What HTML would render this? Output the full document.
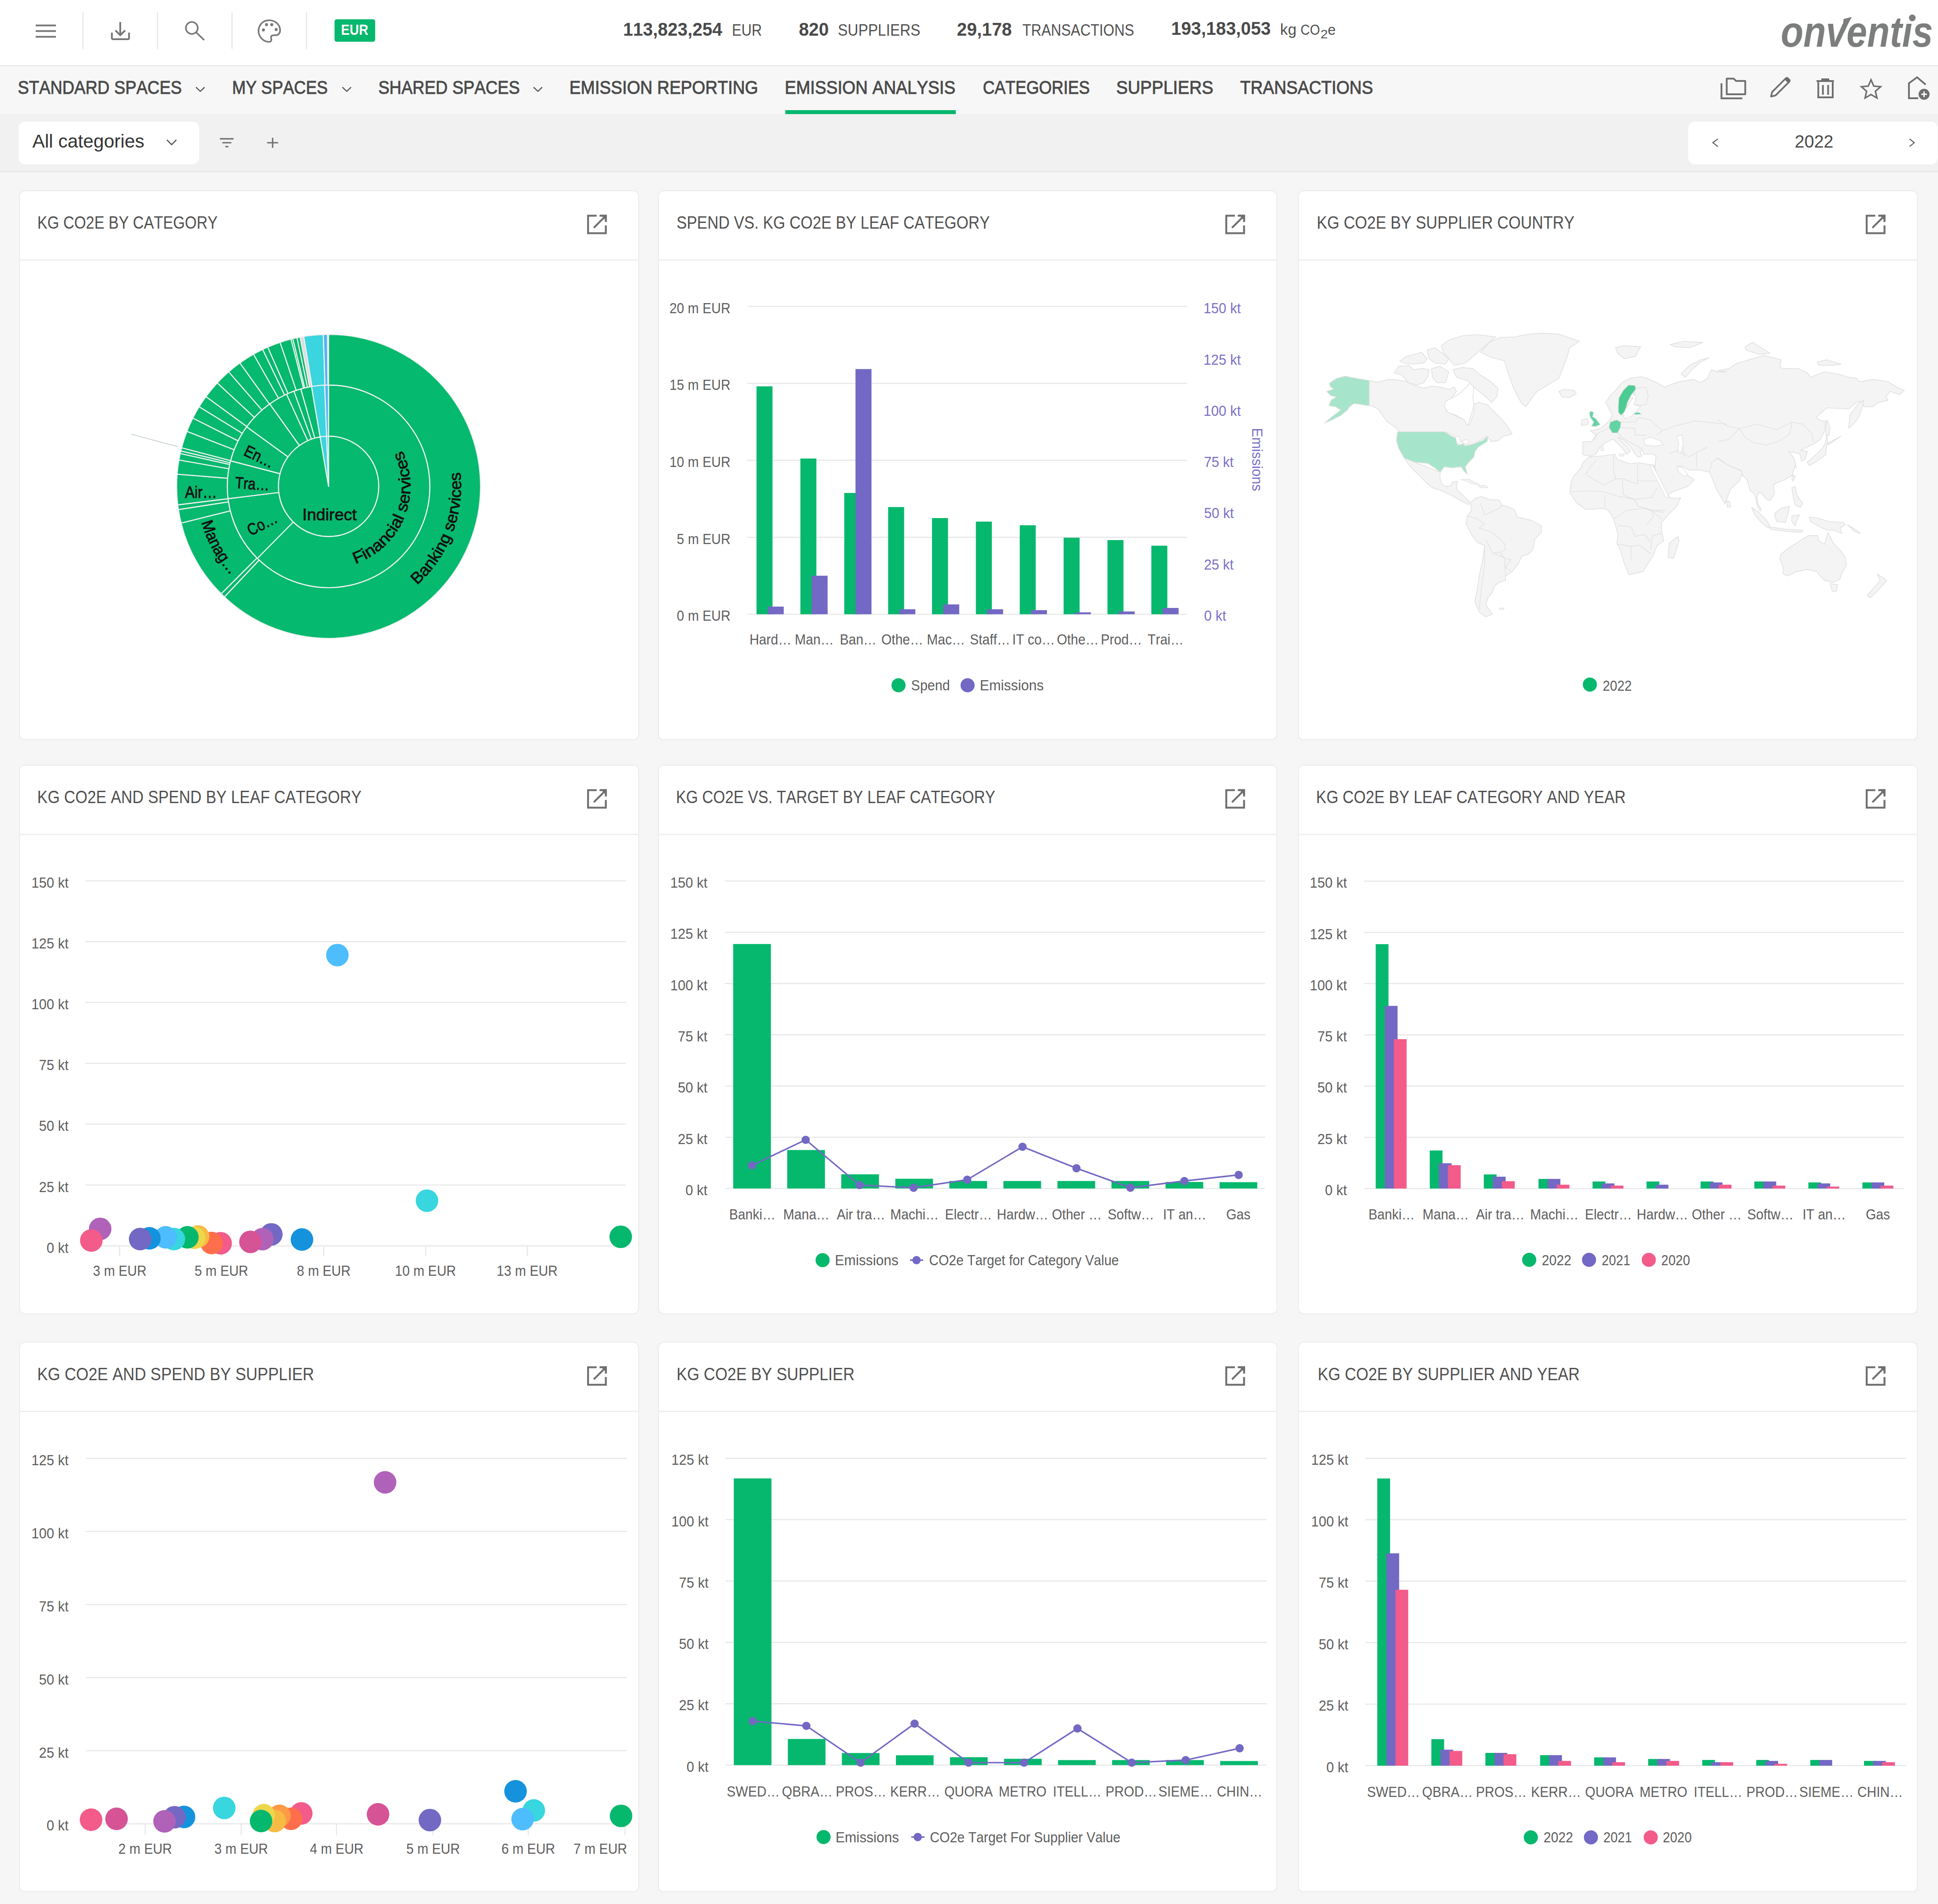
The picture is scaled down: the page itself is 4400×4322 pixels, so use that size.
<!DOCTYPE html>
<html><head><meta charset="utf-8"><title>Emission Analysis</title>
<style>
html,body{margin:0;padding:0;}
body{width:4400px;height:4322px;position:relative;overflow:hidden;background:#f6f6f6;font-family:"Liberation Sans", sans-serif;font-kerning:none;}
.abs{position:absolute;}
.panel{position:absolute;background:#fff;border:2px solid #ebebeb;border-radius:13px;box-sizing:border-box;}
svg text{font-family:"Liberation Sans", sans-serif;font-kerning:none;}
</style></head><body>
<div class="abs" style="left:0;top:0;width:4400px;height:148px;background:#fff;border-bottom:2px solid #e6e6e6"></div><div class="abs" style="left:0;top:150px;width:4400px;height:109px;background:#f7f7f7"></div><div class="abs" style="left:0;top:259px;width:4400px;height:130px;background:#f1f1f1;border-bottom:2px solid #e3e3e3"></div><div class="abs" style="left:42px;top:276px;width:410px;height:97px;background:#fff;border-radius:15px"></div><div class="abs" style="left:3832.5px;top:275.5px;width:566px;height:97px;background:#fff;border-radius:15px"></div><div class="panel" style="left:43px;top:432px;width:1408px;height:1248px"></div><div class="panel" style="left:1494px;top:432px;width:1406px;height:1248px"></div><div class="panel" style="left:2947px;top:432px;width:1407px;height:1248px"></div><div class="panel" style="left:43px;top:1736px;width:1408px;height:1247px"></div><div class="panel" style="left:1494px;top:1736px;width:1406px;height:1247px"></div><div class="panel" style="left:2947px;top:1736px;width:1407px;height:1247px"></div><div class="panel" style="left:43px;top:3046px;width:1408px;height:1249px"></div><div class="panel" style="left:1494px;top:3046px;width:1406px;height:1249px"></div><div class="panel" style="left:2947px;top:3046px;width:1407px;height:1249px"></div><svg class="abs" style="left:0;top:0" width="4400" height="4322" viewBox="0 0 4400 4322"><line x1="81" y1="57.8" x2="127" y2="57.8" stroke="#777777" stroke-width="4"/>
<line x1="81" y1="70.6" x2="127" y2="70.6" stroke="#777777" stroke-width="4"/>
<line x1="81" y1="83.4" x2="127" y2="83.4" stroke="#777777" stroke-width="4"/>
<line x1="188.5" y1="28" x2="188.5" y2="111" stroke="#e4e4e4" stroke-width="2.5"/>
<line x1="357.5" y1="28" x2="357.5" y2="111" stroke="#e4e4e4" stroke-width="2.5"/>
<line x1="526.8" y1="28" x2="526.8" y2="111" stroke="#e4e4e4" stroke-width="2.5"/>
<line x1="695.8" y1="28" x2="695.8" y2="111" stroke="#e4e4e4" stroke-width="2.5"/>
<path d="M273 50 V80 M262 69 L273 80 L284 69" fill="none" stroke="#777777" stroke-width="4"/>
<path d="M254 74 V86 Q254 89 257 89 H290 Q293 89 293 86 V74" fill="none" stroke="#777777" stroke-width="4"/>
<circle cx="435.5" cy="63.5" r="13.5" fill="none" stroke="#777777" stroke-width="3.6"/>
<line x1="445.5" y1="73.5" x2="463.5" y2="91" stroke="#777777" stroke-width="3.8"/>
<path d="M611 46 C596 46 587 58 587 70 C587 84 598 95 611 95 C615 95 617 92 616 88 C614 84 616 80 621 80 L626 80 C632 80 636 75 636 69 C636 55 624 46 611 46 Z" fill="none" stroke="#777777" stroke-width="3.6"/>
<circle cx="598" cy="68" r="3.4" fill="#777777"/>
<circle cx="605" cy="56" r="3.4" fill="#777777"/>
<circle cx="617" cy="56" r="3.4" fill="#777777"/>
<circle cx="627" cy="67" r="3.4" fill="#777777"/>
<rect x="759.5" y="43.7" width="92.3" height="51.1" rx="5" fill="#06b86d"/>
<text transform="translate(774.2,78.8) scale(0.8895,1)" font-size="32.99" fill="#fff" font-weight="bold">EUR</text>
<text transform="translate(1414.8,80.9) scale(0.9371,1)" font-size="43.17" fill="#4a4a4a" font-weight="bold">113,823,254</text>
<text transform="translate(1661.8,80.9) scale(0.8904,1)" font-size="36.19" fill="#505050">EUR</text>
<text transform="translate(1813.7,80.9) scale(0.9436,1)" font-size="43.17" fill="#4a4a4a" font-weight="bold">820</text>
<text transform="translate(1902.3,80.9) scale(0.9217,1)" font-size="36.19" fill="#505050">SUPPLIERS</text>
<text transform="translate(2172.6,80.9) scale(0.9442,1)" font-size="43.17" fill="#4a4a4a" font-weight="bold">29,178</text>
<text transform="translate(2321.3,80.9) scale(0.8952,1)" font-size="36.19" fill="#505050">TRANSACTIONS</text>
<text transform="translate(2659.1,78.8) scale(0.9420,1)" font-size="43.17" fill="#4a4a4a" font-weight="bold">193,183,053</text>
<text transform="translate(2906.3,78.8) scale(1.0111,1)" font-size="34.88" fill="#505050">kg</text>
<text transform="translate(2952.8,78.8) scale(0.8697,1)" font-size="33.72" fill="#505050">CO</text>
<text transform="translate(2998.3,87.4) scale(1.0998,1)" font-size="26.74" fill="#505050">2</text>
<text transform="translate(3014.6,78.8) scale(0.9606,1)" font-size="33.72" fill="#505050">e</text>
<text transform="translate(4042.9,106.3) scale(0.8530,1)" font-size="98.55" fill="#7c7e7d" font-weight="bold" font-style="italic">onventıs</text>
<polygon points="4184.3,54.9 4195.5,54.9 4204.3,38.6 4185.7,43.1" fill="#7c7e7d"/>
<circle cx="4341.6" cy="40.6" r="7.6" fill="#7c7e7d"/>
<text transform="translate(40.6,213.0) scale(0.8795,1)" font-size="43.02" fill="#4b4b4b" stroke="#4b4b4b" stroke-width="1.1">STANDARD SPACES</text>
<text transform="translate(526.9,213.0) scale(0.8659,1)" font-size="43.02" fill="#4b4b4b" stroke="#4b4b4b" stroke-width="1.1">MY SPACES</text>
<text transform="translate(858.9,213.0) scale(0.8788,1)" font-size="43.02" fill="#4b4b4b" stroke="#4b4b4b" stroke-width="1.1">SHARED SPACES</text>
<text transform="translate(1292.8,213.0) scale(0.8966,1)" font-size="43.02" fill="#4b4b4b" stroke="#4b4b4b" stroke-width="1.1">EMISSION REPORTING</text>
<text transform="translate(1781.8,213.0) scale(0.8953,1)" font-size="43.02" fill="#4b4b4b" stroke="#4b4b4b" stroke-width="1.1">EMISSION ANALYSIS</text>
<text transform="translate(2231.4,213.0) scale(0.8607,1)" font-size="43.02" fill="#4b4b4b" stroke="#4b4b4b" stroke-width="1.1">CATEGORIES</text>
<text transform="translate(2534.2,213.0) scale(0.9134,1)" font-size="43.02" fill="#4b4b4b" stroke="#4b4b4b" stroke-width="1.1">SUPPLIERS</text>
<text transform="translate(2815.8,213.0) scale(0.8949,1)" font-size="43.02" fill="#4b4b4b" stroke="#4b4b4b" stroke-width="1.1">TRANSACTIONS</text>
<path d="M445.0 198 L454.7 207.3 L464.5 198" fill="none" stroke="#555" stroke-width="2.5"/>
<path d="M777.5 198 L787.1999999999999 207.3 L797.0 198" fill="none" stroke="#555" stroke-width="2.5"/>
<path d="M1211.5 198 L1221.2 207.3 L1231.0 198" fill="none" stroke="#555" stroke-width="2.5"/>
<rect x="1783" y="250" width="387" height="9" fill="#06b86d"/>
<path d="M3908.4 189 V223.2 H3955.8" fill="none" stroke="#6e6e6e" stroke-width="4"/>
<path d="M3920.3 178.4 H3936 L3941.3 183.7 H3962.4 V214 H3920.3 Z" fill="none" stroke="#6e6e6e" stroke-width="4" stroke-linejoin="round"/>
<g transform="translate(4040,200) rotate(45)"><path d="M-5.5 -27 H5.5 V18 L0 27 L-5.5 18 Z" fill="none" stroke="#6e6e6e" stroke-width="3.8" stroke-linejoin="round" transform="rotate(0)"/><rect x="-5.5" y="-31" width="11" height="9" fill="#6e6e6e"/></g>
<path d="M4124.2 184 H4163.7 M4135 180 H4153 M4128.2 186.3 V221 H4161 V186.3 M4138.7 193 V215 M4150.5 193 V215" fill="none" stroke="#6e6e6e" stroke-width="4"/>
<polygon points="4247.9,181.0 4254.1,195.5 4269.8,196.9 4257.9,207.2 4261.4,222.6 4247.9,214.5 4234.4,222.6 4237.9,207.2 4226.0,196.9 4241.7,195.5" fill="none" stroke="#6e6e6e" stroke-width="3.4" stroke-linejoin="miter"/>
<path d="M4355 223 H4334 V189 L4352.5 175.5 L4372 192" fill="none" stroke="#6e6e6e" stroke-width="4"/>
<circle cx="4368.4" cy="214" r="12.5" fill="#6e6e6e"/>
<path d="M4362 214 H4375 M4368.4 207.5 V220.5" stroke="#fff" stroke-width="3"/>
<text transform="translate(73.4,335.4) scale(0.9855,1)" font-size="43.02" fill="#333">All categories</text>
<path d="M379 317.5 L389.7 328.5 L400.4 317.5" fill="none" stroke="#555" stroke-width="2.6"/>
<path d="M499.2 315.2 H530.4 M504.8 324 H525.3 M511.6 332.9 H518.5" stroke="#6f6f6f" stroke-width="3.2"/>
<path d="M606.4 324 H631.4 M619 312.7 V335.4" stroke="#6f6f6f" stroke-width="3.2"/>
<path d="M3900.2 315.4 L3888.8 323.8 L3900.2 332.7" fill="none" stroke="#5a5a5a" stroke-width="2.3"/>
<path d="M4335.4 315.4 L4346.2 323.8 L4335.4 332.7" fill="none" stroke="#5a5a5a" stroke-width="2.3"/>
<text transform="translate(4074.8,334.8) scale(0.9491,1)" font-size="41.57" fill="#4a4a4a">2022</text>
<text transform="translate(84.7,519.0) scale(0.8421,1)" font-size="40.70" fill="#505050">KG CO2E BY CATEGORY</text>
<line x1="44" y1="590" x2="1450" y2="590" stroke="#ececec" stroke-width="2.5"/>
<path d="M1354.7 489.6 H1335.1 V529.4 H1375.5 V511.8 M1361.2 489.6 H1375.5 V503.9 M1348.1 517.1 L1374.5 490.7" fill="none" stroke="#6f6f6f" stroke-width="4.3"/><path d="M1363 487.5 H1377.6 V502.1 Z" fill="#6f6f6f"/>
<text transform="translate(1535.9,519.0) scale(0.8598,1)" font-size="40.70" fill="#505050">SPEND VS. KG CO2E BY LEAF CATEGORY</text>
<line x1="1495" y1="590" x2="2899" y2="590" stroke="#ececec" stroke-width="2.5"/>
<path d="M2803.7 489.6 H2784.1 V529.4 H2824.5 V511.8 M2810.2 489.6 H2824.5 V503.9 M2797.1 517.1 L2823.5 490.7" fill="none" stroke="#6f6f6f" stroke-width="4.3"/><path d="M2812 487.5 H2826.6 V502.1 Z" fill="#6f6f6f"/>
<text transform="translate(2989.6,519.0) scale(0.8712,1)" font-size="40.70" fill="#505050">KG CO2E BY SUPPLIER COUNTRY</text>
<line x1="2948" y1="590" x2="4353" y2="590" stroke="#ececec" stroke-width="2.5"/>
<path d="M4257.7 489.6 H4238.1 V529.4 H4278.5 V511.8 M4264.2 489.6 H4278.5 V503.9 M4251.1 517.1 L4277.5 490.7" fill="none" stroke="#6f6f6f" stroke-width="4.3"/><path d="M4266 487.5 H4280.6 V502.1 Z" fill="#6f6f6f"/>
<text transform="translate(84.6,1823.0) scale(0.8681,1)" font-size="40.70" fill="#505050">KG CO2E AND SPEND BY LEAF CATEGORY</text>
<line x1="44" y1="1894" x2="1450" y2="1894" stroke="#ececec" stroke-width="2.5"/>
<path d="M1354.7 1793.6 H1335.1 V1833.4 H1375.5 V1815.8 M1361.2 1793.6 H1375.5 V1807.9 M1348.1 1821.1 L1374.5 1794.7" fill="none" stroke="#6f6f6f" stroke-width="4.3"/><path d="M1363 1791.5 H1377.6 V1806.1 Z" fill="#6f6f6f"/>
<text transform="translate(1534.7,1823.0) scale(0.8505,1)" font-size="40.70" fill="#505050">KG CO2E VS. TARGET BY LEAF CATEGORY</text>
<line x1="1495" y1="1894" x2="2899" y2="1894" stroke="#ececec" stroke-width="2.5"/>
<path d="M2803.7 1793.6 H2784.1 V1833.4 H2824.5 V1815.8 M2810.2 1793.6 H2824.5 V1807.9 M2797.1 1821.1 L2823.5 1794.7" fill="none" stroke="#6f6f6f" stroke-width="4.3"/><path d="M2812 1791.5 H2826.6 V1806.1 Z" fill="#6f6f6f"/>
<text transform="translate(2988.1,1823.0) scale(0.8588,1)" font-size="40.70" fill="#505050">KG CO2E BY LEAF CATEGORY AND YEAR</text>
<line x1="2948" y1="1894" x2="4353" y2="1894" stroke="#ececec" stroke-width="2.5"/>
<path d="M4257.7 1793.6 H4238.1 V1833.4 H4278.5 V1815.8 M4264.2 1793.6 H4278.5 V1807.9 M4251.1 1821.1 L4277.5 1794.7" fill="none" stroke="#6f6f6f" stroke-width="4.3"/><path d="M4266 1791.5 H4280.6 V1806.1 Z" fill="#6f6f6f"/>
<text transform="translate(84.5,3133.0) scale(0.8882,1)" font-size="40.70" fill="#505050">KG CO2E AND SPEND BY SUPPLIER</text>
<line x1="44" y1="3204" x2="1450" y2="3204" stroke="#ececec" stroke-width="2.5"/>
<path d="M1354.7 3103.6 H1335.1 V3143.4 H1375.5 V3125.8 M1361.2 3103.6 H1375.5 V3117.9 M1348.1 3131.1 L1374.5 3104.7" fill="none" stroke="#6f6f6f" stroke-width="4.3"/><path d="M1363 3101.5 H1377.6 V3116.1 Z" fill="#6f6f6f"/>
<text transform="translate(1536.1,3133.0) scale(0.8799,1)" font-size="40.70" fill="#505050">KG CO2E BY SUPPLIER</text>
<line x1="1495" y1="3204" x2="2899" y2="3204" stroke="#ececec" stroke-width="2.5"/>
<path d="M2803.7 3103.6 H2784.1 V3143.4 H2824.5 V3125.8 M2810.2 3103.6 H2824.5 V3117.9 M2797.1 3131.1 L2823.5 3104.7" fill="none" stroke="#6f6f6f" stroke-width="4.3"/><path d="M2812 3101.5 H2826.6 V3116.1 Z" fill="#6f6f6f"/>
<text transform="translate(2991.8,3133.0) scale(0.8766,1)" font-size="40.70" fill="#505050">KG CO2E BY SUPPLIER AND YEAR</text>
<line x1="2948" y1="3204" x2="4353" y2="3204" stroke="#ececec" stroke-width="2.5"/>
<path d="M4257.7 3103.6 H4238.1 V3143.4 H4278.5 V3125.8 M4264.2 3103.6 H4278.5 V3117.9 M4251.1 3131.1 L4277.5 3104.7" fill="none" stroke="#6f6f6f" stroke-width="4.3"/><path d="M4266 3101.5 H4280.6 V3116.1 Z" fill="#6f6f6f"/>
<path d="M746 1104 L746.00 990.00 A114 114 0 1 1 726.79 991.63 Z" fill="#05b96e" stroke="#f2f2f2" stroke-width="2.4" stroke-linejoin="round"/>
<path d="M746 1104 L726.79 991.63 A114 114 0 0 1 741.62 990.08 Z" fill="#3ad5df" stroke="#f2f2f2" stroke-width="2.4" stroke-linejoin="round"/>
<path d="M746 1104 L741.62 990.08 A114 114 0 0 1 745.80 990.00 Z" fill="#56b2f7" stroke="#f2f2f2" stroke-width="2.4" stroke-linejoin="round"/>
<path d="M746.00 874.00 A230 230 0 1 1 584.22 1267.48 L665.81 1185.03 A114 114 0 1 0 746.00 990.00 Z" fill="#05b96e" stroke="#f2f2f2" stroke-width="2.4" stroke-linejoin="round"/>
<path d="M584.22 1267.48 A230 230 0 0 1 517.71 1132.03 L632.85 1117.89 A114 114 0 0 0 665.81 1185.03 Z" fill="#05b96e" stroke="#f2f2f2" stroke-width="2.4" stroke-linejoin="round"/>
<path d="M517.71 1132.03 A230 230 0 0 1 523.43 1046.02 L635.68 1075.26 A114 114 0 0 0 632.85 1117.89 Z" fill="#05b96e" stroke="#f2f2f2" stroke-width="2.4" stroke-linejoin="round"/>
<path d="M523.43 1046.02 A230 230 0 0 1 559.93 968.81 L653.77 1036.99 A114 114 0 0 0 635.68 1075.26 Z" fill="#05b96e" stroke="#f2f2f2" stroke-width="2.4" stroke-linejoin="round"/>
<path d="M559.93 968.81 A230 230 0 0 1 612.44 916.75 L679.80 1011.19 A114 114 0 0 0 653.77 1036.99 Z" fill="#05b96e" stroke="#f2f2f2" stroke-width="2.4" stroke-linejoin="round"/>
<path d="M612.44 916.75 A230 230 0 0 1 650.62 894.71 L698.72 1000.26 A114 114 0 0 0 679.80 1011.19 Z" fill="#05b96e" stroke="#f2f2f2" stroke-width="2.4" stroke-linejoin="round"/>
<path d="M650.62 894.71 A230 230 0 0 1 667.34 887.87 L707.01 996.88 A114 114 0 0 0 698.72 1000.26 Z" fill="#05b96e" stroke="#f2f2f2" stroke-width="2.4" stroke-linejoin="round"/>
<path d="M667.34 887.87 A230 230 0 0 1 682.99 882.80 L714.77 994.36 A114 114 0 0 0 707.01 996.88 Z" fill="#05b96e" stroke="#f2f2f2" stroke-width="2.4" stroke-linejoin="round"/>
<path d="M682.99 882.80 A230 230 0 0 1 707.25 877.29 L726.79 991.63 A114 114 0 0 0 714.77 994.36 Z" fill="#05b96e" stroke="#f2f2f2" stroke-width="2.4" stroke-linejoin="round"/>
<path d="M707.25 877.29 A230 230 0 0 1 737.17 874.17 L741.62 990.08 A114 114 0 0 0 726.79 991.63 Z" fill="#3ad5df" stroke="#f2f2f2" stroke-width="2.4" stroke-linejoin="round"/>
<path d="M737.17 874.17 A230 230 0 0 1 745.60 874.00 L745.80 990.00 A114 114 0 0 0 741.62 990.08 Z" fill="#56b2f7" stroke="#f2f2f2" stroke-width="2.4" stroke-linejoin="round"/>
<path d="M746.00 759.00 A345 345 0 1 1 509.39 1355.08 L588.26 1271.39 A230 230 0 1 0 746.00 874.00 Z" fill="#05b96e" stroke="#f2f2f2" stroke-width="2.4" stroke-linejoin="round"/>
<path d="M509.39 1355.08 A345 345 0 0 1 502.05 1347.95 L583.37 1266.63 A230 230 0 0 0 588.26 1271.39 Z" fill="#05b96e" stroke="#f2f2f2" stroke-width="2.4" stroke-linejoin="round"/>
<path d="M502.05 1347.95 A345 345 0 0 1 411.25 1187.46 L522.83 1159.64 A230 230 0 0 0 583.37 1266.63 Z" fill="#05b96e" stroke="#f2f2f2" stroke-width="2.4" stroke-linejoin="round"/>
<path d="M411.25 1187.46 A345 345 0 0 1 405.06 1156.78 L518.71 1139.19 A230 230 0 0 0 522.83 1159.64 Z" fill="#05b96e" stroke="#f2f2f2" stroke-width="2.4" stroke-linejoin="round"/>
<path d="M405.06 1156.78 A345 345 0 0 1 403.57 1146.04 L517.71 1132.03 A230 230 0 0 0 518.71 1139.19 Z" fill="#05b96e" stroke="#f2f2f2" stroke-width="2.4" stroke-linejoin="round"/>
<path d="M403.57 1146.04 A345 345 0 0 1 402.11 1076.33 L516.74 1085.55 A230 230 0 0 0 517.71 1132.03 Z" fill="#05b96e" stroke="#f2f2f2" stroke-width="2.4" stroke-linejoin="round"/>
<path d="M402.11 1076.33 A345 345 0 0 1 406.24 1044.09 L519.49 1064.06 A230 230 0 0 0 516.74 1085.55 Z" fill="#05b96e" stroke="#f2f2f2" stroke-width="2.4" stroke-linejoin="round"/>
<path d="M406.24 1044.09 A345 345 0 0 1 409.18 1029.33 L521.45 1054.22 A230 230 0 0 0 519.49 1064.06 Z" fill="#05b96e" stroke="#f2f2f2" stroke-width="2.4" stroke-linejoin="round"/>
<path d="M409.18 1029.33 A345 345 0 0 1 410.53 1023.46 L522.35 1050.31 A230 230 0 0 0 521.45 1054.22 Z" fill="#05b96e" stroke="#f2f2f2" stroke-width="2.4" stroke-linejoin="round"/>
<path d="M410.53 1023.46 A345 345 0 0 1 412.29 1016.45 L523.53 1045.64 A230 230 0 0 0 522.35 1050.31 Z" fill="#05b96e" stroke="#f2f2f2" stroke-width="2.4" stroke-linejoin="round"/>
<path d="M412.29 1016.45 A345 345 0 0 1 424.35 979.24 L531.57 1020.83 A230 230 0 0 0 523.53 1045.64 Z" fill="#05b96e" stroke="#f2f2f2" stroke-width="2.4" stroke-linejoin="round"/>
<path d="M424.35 979.24 A345 345 0 0 1 437.79 948.98 L540.52 1000.66 A230 230 0 0 0 531.57 1020.83 Z" fill="#05b96e" stroke="#f2f2f2" stroke-width="2.4" stroke-linejoin="round"/>
<path d="M437.79 948.98 A345 345 0 0 1 452.15 923.22 L550.10 983.48 A230 230 0 0 0 540.52 1000.66 Z" fill="#05b96e" stroke="#f2f2f2" stroke-width="2.4" stroke-linejoin="round"/>
<path d="M452.15 923.22 A345 345 0 0 1 467.60 900.24 L560.40 968.16 A230 230 0 0 0 550.10 983.48 Z" fill="#05b96e" stroke="#f2f2f2" stroke-width="2.4" stroke-linejoin="round"/>
<path d="M467.60 900.24 A345 345 0 0 1 493.27 869.15 L577.52 947.43 A230 230 0 0 0 560.40 968.16 Z" fill="#05b96e" stroke="#f2f2f2" stroke-width="2.4" stroke-linejoin="round"/>
<path d="M493.27 869.15 A345 345 0 0 1 519.21 844.02 L594.80 930.68 A230 230 0 0 0 577.52 947.43 Z" fill="#05b96e" stroke="#f2f2f2" stroke-width="2.4" stroke-linejoin="round"/>
<path d="M519.21 844.02 A345 345 0 0 1 544.68 823.83 L611.79 917.22 A230 230 0 0 0 594.80 930.68 Z" fill="#05b96e" stroke="#f2f2f2" stroke-width="2.4" stroke-linejoin="round"/>
<path d="M544.68 823.83 A345 345 0 0 1 575.59 804.02 L632.39 904.02 A230 230 0 0 0 611.79 917.22 Z" fill="#05b96e" stroke="#f2f2f2" stroke-width="2.4" stroke-linejoin="round"/>
<path d="M575.59 804.02 A345 345 0 0 1 596.39 793.13 L646.26 896.75 A230 230 0 0 0 632.39 904.02 Z" fill="#05b96e" stroke="#f2f2f2" stroke-width="2.4" stroke-linejoin="round"/>
<path d="M596.39 793.13 A345 345 0 0 1 607.88 787.85 L653.92 893.24 A230 230 0 0 0 646.26 896.75 Z" fill="#05b96e" stroke="#f2f2f2" stroke-width="2.4" stroke-linejoin="round"/>
<path d="M607.88 787.85 A345 345 0 0 1 635.96 777.02 L672.64 886.01 A230 230 0 0 0 653.92 893.24 Z" fill="#05b96e" stroke="#f2f2f2" stroke-width="2.4" stroke-linejoin="round"/>
<path d="M635.96 777.02 A345 345 0 0 1 660.79 769.69 L689.19 881.13 A230 230 0 0 0 672.64 886.01 Z" fill="#05b96e" stroke="#f2f2f2" stroke-width="2.4" stroke-linejoin="round"/>
<path d="M660.79 769.69 A345 345 0 0 1 664.88 768.67 L691.92 880.45 A230 230 0 0 0 689.19 881.13 Z" fill="#05b96e" stroke="#f2f2f2" stroke-width="2.4" stroke-linejoin="round"/>
<path d="M664.88 768.67 A345 345 0 0 1 674.27 766.54 L698.18 879.03 A230 230 0 0 0 691.92 880.45 Z" fill="#05b96e" stroke="#f2f2f2" stroke-width="2.4" stroke-linejoin="round"/>
<path d="M674.27 766.54 A345 345 0 0 1 681.35 765.11 L702.90 878.07 A230 230 0 0 0 698.18 879.03 Z" fill="#05b96e" stroke="#f2f2f2" stroke-width="2.4" stroke-linejoin="round"/>
<path d="M681.35 765.11 A345 345 0 0 1 689.65 763.63 L708.44 877.09 A230 230 0 0 0 702.90 878.07 Z" fill="#dcdcdc" stroke="#f2f2f2" stroke-width="2.4" stroke-linejoin="round"/>
<path d="M689.65 763.63 A345 345 0 0 1 733.96 759.21 L737.97 874.14 A230 230 0 0 0 708.44 877.09 Z" fill="#3ad5df" stroke="#f2f2f2" stroke-width="2.4" stroke-linejoin="round"/>
<path d="M733.96 759.21 A345 345 0 0 1 743.59 759.01 L744.39 874.01 A230 230 0 0 0 737.97 874.14 Z" fill="#56b2f7" stroke="#f2f2f2" stroke-width="2.4" stroke-linejoin="round"/>
<line x1="297.8" y1="985.6" x2="404" y2="1014" stroke="#c9d3d3" stroke-width="2"/>
<text transform="translate(686.5,1181.2) scale(1.0188,1)" font-size="36.92" fill="#111" stroke="#111" stroke-width="0.9">Indirect</text>
<path id="fs" d="M762.21 1289.29 A186 186 0 0 0 888.48 984.44" fill="none"/>
<text font-size="36.92" fill="#111" stroke="#111" stroke-width="1.0"><textPath href="#fs" startOffset="50%" text-anchor="middle" textLength="314" lengthAdjust="spacingAndGlyphs">Financial services</textPath></text>
<path id="bs" d="M896.50 1364.67 A301 301 0 0 0 1032.27 1010.99" fill="none"/>
<text font-size="36.92" fill="#111" stroke="#111" stroke-width="1.0"><textPath href="#bs" startOffset="50%" text-anchor="middle" textLength="285" lengthAdjust="spacingAndGlyphs">Banking services</textPath></text>
<path id="mg" d="M446.00 1104.00 A300 300 0 0 0 587.02 1358.41" fill="none"/>
<text font-size="36.92" fill="#111" stroke="#111" stroke-width="1.0"><textPath href="#mg" startOffset="50%" text-anchor="middle" textLength="138" lengthAdjust="spacingAndGlyphs">Manag…</textPath></text>
<g transform="translate(594.0,1190.0) rotate(-27.0)"><text transform="translate(-34.6,12.7) scale(0.8546,1)" font-size="36.92" fill="#111" stroke="#111" stroke-width="0.9">Co…</text></g>
<g transform="translate(571.0,1098.0) rotate(4.0)"><text transform="translate(-37.2,12.7) scale(0.8444,1)" font-size="36.92" fill="#111" stroke="#111" stroke-width="0.9">Tra…</text></g>
<g transform="translate(588.0,1036.0) rotate(26.0)"><text transform="translate(-34.6,12.7) scale(0.8645,1)" font-size="36.92" fill="#111" stroke="#111" stroke-width="0.9">En…</text></g>
<g transform="translate(454.2,1117.0) rotate(0.0)"><text transform="translate(-34.1,12.7) scale(0.8836,1)" font-size="36.92" fill="#111" stroke="#111" stroke-width="0.9">Air…</text></g>
<line x1="1697" y1="695.5" x2="2695" y2="695.5" stroke="#e8e8e8" stroke-width="2.6"/>
<text transform="translate(1519.9,710.6) scale(0.9100,1)" font-size="32.99" fill="#5e5e5e">20 m EUR</text>
<line x1="1697" y1="870.2" x2="2695" y2="870.2" stroke="#e8e8e8" stroke-width="2.6"/>
<text transform="translate(1519.9,885.3) scale(0.9100,1)" font-size="32.99" fill="#5e5e5e">15 m EUR</text>
<line x1="1697" y1="1044.9" x2="2695" y2="1044.9" stroke="#e8e8e8" stroke-width="2.6"/>
<text transform="translate(1519.9,1060.0) scale(0.9100,1)" font-size="32.99" fill="#5e5e5e">10 m EUR</text>
<line x1="1697" y1="1219.6" x2="2695" y2="1219.6" stroke="#e8e8e8" stroke-width="2.6"/>
<text transform="translate(1536.6,1234.7) scale(0.9100,1)" font-size="32.99" fill="#5e5e5e">5 m EUR</text>
<line x1="1697" y1="1394.3" x2="2695" y2="1394.3" stroke="#e8e8e8" stroke-width="2.6"/>
<text transform="translate(1536.6,1409.4) scale(0.9100,1)" font-size="32.99" fill="#5e5e5e">0 m EUR</text>
<text transform="translate(2732.6,711.4) scale(0.9400,1)" font-size="32.99" fill="#7a70c8">150 kt</text>
<text transform="translate(2732.6,827.6) scale(0.9400,1)" font-size="32.99" fill="#7a70c8">125 kt</text>
<text transform="translate(2732.6,943.9) scale(0.9400,1)" font-size="32.99" fill="#7a70c8">100 kt</text>
<text transform="translate(2733.4,1060.1) scale(0.9400,1)" font-size="32.99" fill="#7a70c8">75 kt</text>
<text transform="translate(2733.8,1176.3) scale(0.9400,1)" font-size="32.99" fill="#7a70c8">50 kt</text>
<text transform="translate(2733.4,1292.6) scale(0.9400,1)" font-size="32.99" fill="#7a70c8">25 kt</text>
<text transform="translate(2733.8,1408.8) scale(0.9400,1)" font-size="32.99" fill="#7a70c8">0 kt</text>
<g transform="translate(2854,1044) rotate(90)"><text transform="translate(-72.6,11.3) scale(0.9560,1)" font-size="32.99" fill="#7a70c8">Emissions</text></g>
<rect x="1717.6" y="877.0" width="36.3" height="517.3" fill="#06b86d"/>
<rect x="1743.1" y="1377.0" width="36.3" height="17.3" fill="#7368c4"/>
<text transform="translate(1701.7,1463.2) scale(0.9100,1)" font-size="32.99" fill="#5e5e5e">Hard…</text>
<rect x="1817.2" y="1040.8" width="36.3" height="353.5" fill="#06b86d"/>
<rect x="1842.7" y="1306.8" width="36.3" height="87.5" fill="#7368c4"/>
<text transform="translate(1804.6,1463.2) scale(0.9100,1)" font-size="32.99" fill="#5e5e5e">Man…</text>
<rect x="1916.8" y="1119.0" width="36.3" height="275.3" fill="#06b86d"/>
<rect x="1942.3" y="837.8" width="36.3" height="556.5" fill="#7368c4"/>
<text transform="translate(1906.7,1463.2) scale(0.9100,1)" font-size="32.99" fill="#5e5e5e">Ban…</text>
<rect x="2016.4" y="1151.0" width="36.3" height="243.3" fill="#06b86d"/>
<rect x="2041.9" y="1383.0" width="36.3" height="11.3" fill="#7368c4"/>
<text transform="translate(2001.0,1463.2) scale(0.9100,1)" font-size="32.99" fill="#5e5e5e">Othe…</text>
<rect x="2116.0" y="1176.0" width="36.3" height="218.3" fill="#06b86d"/>
<rect x="2141.5" y="1372.0" width="36.3" height="22.3" fill="#7368c4"/>
<text transform="translate(2104.2,1463.2) scale(0.9100,1)" font-size="32.99" fill="#5e5e5e">Mac…</text>
<rect x="2215.6" y="1184.0" width="36.3" height="210.3" fill="#06b86d"/>
<rect x="2241.1" y="1383.0" width="36.3" height="11.3" fill="#7368c4"/>
<text transform="translate(2201.9,1463.2) scale(0.9100,1)" font-size="32.99" fill="#5e5e5e">Staff…</text>
<rect x="2315.2" y="1192.3" width="36.3" height="202.0" fill="#06b86d"/>
<rect x="2340.7" y="1385.0" width="36.3" height="9.3" fill="#7368c4"/>
<text transform="translate(2298.3,1463.2) scale(0.9100,1)" font-size="32.99" fill="#5e5e5e">IT co…</text>
<rect x="2414.8" y="1220.6" width="36.3" height="173.7" fill="#06b86d"/>
<rect x="2440.3" y="1390.0" width="36.3" height="4.3" fill="#7368c4"/>
<text transform="translate(2399.4,1463.2) scale(0.9100,1)" font-size="32.99" fill="#5e5e5e">Othe…</text>
<rect x="2514.4" y="1226.0" width="36.3" height="168.3" fill="#06b86d"/>
<rect x="2539.9" y="1388.0" width="36.3" height="6.3" fill="#7368c4"/>
<text transform="translate(2499.3,1463.2) scale(0.9100,1)" font-size="32.99" fill="#5e5e5e">Prod…</text>
<rect x="2614.0" y="1238.7" width="36.3" height="155.6" fill="#06b86d"/>
<rect x="2639.5" y="1380.0" width="36.3" height="14.3" fill="#7368c4"/>
<text transform="translate(2605.6,1463.2) scale(0.9100,1)" font-size="32.99" fill="#5e5e5e">Trai…</text>
<circle cx="2040.0" cy="1555.5" r="16" fill="#06b86d"/>
<text transform="translate(2068.6,1567.0) scale(0.9228,1)" font-size="32.99" fill="#5e5e5e">Spend</text>
<circle cx="2196.8" cy="1555.5" r="16" fill="#7368c4"/>
<text transform="translate(2224.4,1567.0) scale(0.9669,1)" font-size="32.99" fill="#5e5e5e">Emissions</text>
<circle cx="3609.6" cy="1553.9" r="16" fill="#06b86d"/>
<text transform="translate(3638.8,1567.6) scale(0.8796,1)" font-size="33.72" fill="#5e5e5e">2022</text>
<line x1="194" y1="1999.5" x2="1421" y2="1999.5" stroke="#e8e8e8" stroke-width="2.6"/>
<text transform="translate(71.2,2015.0) scale(0.9400,1)" font-size="32.99" fill="#5e5e5e">150 kt</text>
<line x1="194" y1="2137.6" x2="1421" y2="2137.6" stroke="#e8e8e8" stroke-width="2.6"/>
<text transform="translate(71.2,2153.1) scale(0.9400,1)" font-size="32.99" fill="#5e5e5e">125 kt</text>
<line x1="194" y1="2275.7" x2="1421" y2="2275.7" stroke="#e8e8e8" stroke-width="2.6"/>
<text transform="translate(71.2,2291.2) scale(0.9400,1)" font-size="32.99" fill="#5e5e5e">100 kt</text>
<line x1="194" y1="2413.8" x2="1421" y2="2413.8" stroke="#e8e8e8" stroke-width="2.6"/>
<text transform="translate(88.5,2429.3) scale(0.9400,1)" font-size="32.99" fill="#5e5e5e">75 kt</text>
<line x1="194" y1="2551.9" x2="1421" y2="2551.9" stroke="#e8e8e8" stroke-width="2.6"/>
<text transform="translate(88.5,2567.4) scale(0.9400,1)" font-size="32.99" fill="#5e5e5e">50 kt</text>
<line x1="194" y1="2690.0" x2="1421" y2="2690.0" stroke="#e8e8e8" stroke-width="2.6"/>
<text transform="translate(88.5,2705.5) scale(0.9400,1)" font-size="32.99" fill="#5e5e5e">25 kt</text>
<line x1="194" y1="2828.1" x2="1421" y2="2828.1" stroke="#e8e8e8" stroke-width="2.6"/>
<text transform="translate(105.7,2843.6) scale(0.9400,1)" font-size="32.99" fill="#5e5e5e">0 kt</text>
<line x1="271.7" y1="2828" x2="271.7" y2="2852" stroke="#e8e8e8" stroke-width="2.6"/>
<text transform="translate(210.9,2896.3) scale(0.9100,1)" font-size="32.99" fill="#5e5e5e">3 m EUR</text>
<line x1="502.6" y1="2828" x2="502.6" y2="2852" stroke="#e8e8e8" stroke-width="2.6"/>
<text transform="translate(441.8,2896.3) scale(0.9100,1)" font-size="32.99" fill="#5e5e5e">5 m EUR</text>
<line x1="734.9" y1="2828" x2="734.9" y2="2852" stroke="#e8e8e8" stroke-width="2.6"/>
<text transform="translate(674.1,2896.3) scale(0.9100,1)" font-size="32.99" fill="#5e5e5e">8 m EUR</text>
<line x1="966.5" y1="2828" x2="966.5" y2="2852" stroke="#e8e8e8" stroke-width="2.6"/>
<text transform="translate(896.8,2896.3) scale(0.9100,1)" font-size="32.99" fill="#5e5e5e">10 m EUR</text>
<line x1="1197.3" y1="2828" x2="1197.3" y2="2852" stroke="#e8e8e8" stroke-width="2.6"/>
<text transform="translate(1127.6,2896.3) scale(0.9100,1)" font-size="32.99" fill="#5e5e5e">13 m EUR</text>
<circle cx="1409.3" cy="2807.5" r="25.6" fill="#06b86d"/>
<circle cx="969.4" cy="2725.5" r="25.6" fill="#38d6de"/>
<circle cx="766.0" cy="2168.0" r="25.6" fill="#4dbdfe"/>
<circle cx="685.6" cy="2813.7" r="25.6" fill="#1592dc"/>
<circle cx="616.0" cy="2802.0" r="25.6" fill="#7368c4"/>
<circle cx="595.8" cy="2812.8" r="25.6" fill="#b062b8"/>
<circle cx="568.6" cy="2819.0" r="25.6" fill="#d65396"/>
<circle cx="500.9" cy="2822.2" r="25.6" fill="#f25b8a"/>
<circle cx="480.5" cy="2821.7" r="25.6" fill="#ff6e4b"/>
<circle cx="449.8" cy="2806.8" r="25.6" fill="#f6bb42"/>
<circle cx="440.8" cy="2809.7" r="25.6" fill="#eed64a"/>
<circle cx="425.4" cy="2808.6" r="25.6" fill="#06b86d"/>
<circle cx="394.8" cy="2812.6" r="25.6" fill="#38d6de"/>
<circle cx="376.1" cy="2808.6" r="25.6" fill="#4dbdfe"/>
<circle cx="339.2" cy="2810.9" r="25.6" fill="#1592dc"/>
<circle cx="318.2" cy="2812.6" r="25.6" fill="#7368c4"/>
<circle cx="227.4" cy="2789.5" r="25.6" fill="#b062b8"/>
<circle cx="207.3" cy="2815.9" r="25.6" fill="#f25b8a"/>
<line x1="1645.8" y1="2000.0" x2="2872.4" y2="2000.0" stroke="#e8e8e8" stroke-width="2.6"/>
<text transform="translate(1521.7,2015.0) scale(0.9400,1)" font-size="32.99" fill="#5e5e5e">150 kt</text>
<line x1="1645.8" y1="2116.3" x2="2872.4" y2="2116.3" stroke="#e8e8e8" stroke-width="2.6"/>
<text transform="translate(1521.7,2131.3) scale(0.9400,1)" font-size="32.99" fill="#5e5e5e">125 kt</text>
<line x1="1645.8" y1="2232.6" x2="2872.4" y2="2232.6" stroke="#e8e8e8" stroke-width="2.6"/>
<text transform="translate(1521.7,2247.6) scale(0.9400,1)" font-size="32.99" fill="#5e5e5e">100 kt</text>
<line x1="1645.8" y1="2348.9" x2="2872.4" y2="2348.9" stroke="#e8e8e8" stroke-width="2.6"/>
<text transform="translate(1539.0,2363.9) scale(0.9400,1)" font-size="32.99" fill="#5e5e5e">75 kt</text>
<line x1="1645.8" y1="2465.2" x2="2872.4" y2="2465.2" stroke="#e8e8e8" stroke-width="2.6"/>
<text transform="translate(1539.0,2480.2) scale(0.9400,1)" font-size="32.99" fill="#5e5e5e">50 kt</text>
<line x1="1645.8" y1="2581.5" x2="2872.4" y2="2581.5" stroke="#e8e8e8" stroke-width="2.6"/>
<text transform="translate(1539.0,2596.5) scale(0.9400,1)" font-size="32.99" fill="#5e5e5e">25 kt</text>
<line x1="1645.8" y1="2697.8" x2="2872.4" y2="2697.8" stroke="#e8e8e8" stroke-width="2.6"/>
<text transform="translate(1556.2,2712.8) scale(0.9400,1)" font-size="32.99" fill="#5e5e5e">0 kt</text>
<rect x="1664.6" y="2142.9" width="85.6" height="554.9" fill="#06b86d"/>
<text transform="translate(1655.6,2768.4) scale(0.9100,1)" font-size="32.99" fill="#5e5e5e">Banki…</text>
<rect x="1787.3" y="2610.5" width="85.6" height="87.3" fill="#06b86d"/>
<text transform="translate(1778.3,2768.4) scale(0.9100,1)" font-size="32.99" fill="#5e5e5e">Mana…</text>
<rect x="1910.0" y="2665.6" width="85.6" height="32.2" fill="#06b86d"/>
<text transform="translate(1899.8,2768.4) scale(0.9100,1)" font-size="32.99" fill="#5e5e5e">Air tra…</text>
<rect x="2032.7" y="2675.7" width="85.6" height="22.1" fill="#06b86d"/>
<text transform="translate(2021.2,2768.4) scale(0.9100,1)" font-size="32.99" fill="#5e5e5e">Machi…</text>
<rect x="2155.4" y="2680.8" width="85.6" height="17.0" fill="#06b86d"/>
<text transform="translate(2145.6,2768.4) scale(0.9100,1)" font-size="32.99" fill="#5e5e5e">Electr…</text>
<rect x="2278.1" y="2680.8" width="85.6" height="17.0" fill="#06b86d"/>
<text transform="translate(2263.3,2768.4) scale(0.9100,1)" font-size="32.99" fill="#5e5e5e">Hardw…</text>
<rect x="2400.8" y="2680.8" width="85.6" height="17.0" fill="#06b86d"/>
<text transform="translate(2388.2,2768.4) scale(0.9100,1)" font-size="32.99" fill="#5e5e5e">Other …</text>
<rect x="2523.5" y="2680.8" width="85.6" height="17.0" fill="#06b86d"/>
<text transform="translate(2515.1,2768.4) scale(0.9100,1)" font-size="32.99" fill="#5e5e5e">Softw…</text>
<rect x="2646.2" y="2683.0" width="85.6" height="14.8" fill="#06b86d"/>
<text transform="translate(2640.4,2768.4) scale(0.9100,1)" font-size="32.99" fill="#5e5e5e">IT an…</text>
<rect x="2768.9" y="2683.5" width="85.6" height="14.3" fill="#06b86d"/>
<text transform="translate(2784.0,2768.4) scale(0.9100,1)" font-size="32.99" fill="#5e5e5e">Gas</text>
<polyline points="1707.4,2645.3 1829.2,2587.3 1951.7,2690.2 2074.2,2696 2196,2677.9 2321.5,2603.2 2444,2651.8 2566.5,2696 2689,2680.8 2812.2,2667" fill="none" stroke="#7368c4" stroke-width="3.4" stroke-linejoin="round"/>
<circle cx="1707.4" cy="2645.3" r="9.4" fill="#7368c4"/>
<circle cx="1829.2" cy="2587.3" r="9.4" fill="#7368c4"/>
<circle cx="1951.7" cy="2690.2" r="9.4" fill="#7368c4"/>
<circle cx="2074.2" cy="2696.0" r="9.4" fill="#7368c4"/>
<circle cx="2196.0" cy="2677.9" r="9.4" fill="#7368c4"/>
<circle cx="2321.5" cy="2603.2" r="9.4" fill="#7368c4"/>
<circle cx="2444.0" cy="2651.8" r="9.4" fill="#7368c4"/>
<circle cx="2566.5" cy="2696.0" r="9.4" fill="#7368c4"/>
<circle cx="2689.0" cy="2680.8" r="9.4" fill="#7368c4"/>
<circle cx="2812.2" cy="2667.0" r="9.4" fill="#7368c4"/>
<circle cx="1867.6" cy="2860.5" r="16" fill="#06b86d"/>
<text transform="translate(1895.4,2872.0) scale(0.9608,1)" font-size="32.99" fill="#5e5e5e">Emissions</text>
<line x1="2066" y1="2860.5" x2="2096" y2="2860.5" stroke="#7368c4" stroke-width="3.4"/>
<circle cx="2080.8" cy="2860.5" r="9.4" fill="#7368c4"/>
<text transform="translate(2109.5,2872.0) scale(0.9071,1)" font-size="32.99" fill="#5e5e5e">CO2e Target for Category Value</text>
<line x1="3097.3" y1="2000.2" x2="4322.8" y2="2000.2" stroke="#e8e8e8" stroke-width="2.6"/>
<text transform="translate(2973.7,2015.2) scale(0.9400,1)" font-size="32.99" fill="#5e5e5e">150 kt</text>
<line x1="3097.3" y1="2116.5" x2="4322.8" y2="2116.5" stroke="#e8e8e8" stroke-width="2.6"/>
<text transform="translate(2973.7,2131.5) scale(0.9400,1)" font-size="32.99" fill="#5e5e5e">125 kt</text>
<line x1="3097.3" y1="2232.8" x2="4322.8" y2="2232.8" stroke="#e8e8e8" stroke-width="2.6"/>
<text transform="translate(2973.7,2247.8) scale(0.9400,1)" font-size="32.99" fill="#5e5e5e">100 kt</text>
<line x1="3097.3" y1="2349.1" x2="4322.8" y2="2349.1" stroke="#e8e8e8" stroke-width="2.6"/>
<text transform="translate(2991.0,2364.1) scale(0.9400,1)" font-size="32.99" fill="#5e5e5e">75 kt</text>
<line x1="3097.3" y1="2465.4" x2="4322.8" y2="2465.4" stroke="#e8e8e8" stroke-width="2.6"/>
<text transform="translate(2991.0,2480.4) scale(0.9400,1)" font-size="32.99" fill="#5e5e5e">50 kt</text>
<line x1="3097.3" y1="2581.7" x2="4322.8" y2="2581.7" stroke="#e8e8e8" stroke-width="2.6"/>
<text transform="translate(2991.0,2596.7) scale(0.9400,1)" font-size="32.99" fill="#5e5e5e">25 kt</text>
<line x1="3097.3" y1="2698.0" x2="4322.8" y2="2698.0" stroke="#e8e8e8" stroke-width="2.6"/>
<text transform="translate(3008.2,2713.0) scale(0.9400,1)" font-size="32.99" fill="#5e5e5e">0 kt</text>
<rect x="3123.4" y="2143.2" width="29.0" height="554.7" fill="#06b86d"/>
<rect x="3144.0" y="2283.3" width="29.0" height="414.6" fill="#7368c4"/>
<rect x="3164.6" y="2358.8" width="29.0" height="339.1" fill="#f25b8a"/>
<text transform="translate(3107.0,2768.0) scale(0.9100,1)" font-size="32.99" fill="#5e5e5e">Banki…</text>
<rect x="3246.1" y="2611.5" width="29.0" height="86.4" fill="#06b86d"/>
<rect x="3266.7" y="2640.5" width="29.0" height="57.4" fill="#7368c4"/>
<rect x="3287.3" y="2644.9" width="29.0" height="53.0" fill="#f25b8a"/>
<text transform="translate(3229.7,2768.0) scale(0.9100,1)" font-size="32.99" fill="#5e5e5e">Mana…</text>
<rect x="3368.8" y="2665.9" width="29.0" height="32.0" fill="#06b86d"/>
<rect x="3389.4" y="2671.0" width="29.0" height="26.9" fill="#7368c4"/>
<rect x="3410.0" y="2681.2" width="29.0" height="16.7" fill="#f25b8a"/>
<text transform="translate(3351.1,2768.0) scale(0.9100,1)" font-size="32.99" fill="#5e5e5e">Air tra…</text>
<rect x="3493.0" y="2676.1" width="29.0" height="21.8" fill="#06b86d"/>
<rect x="3513.6" y="2676.1" width="29.0" height="21.8" fill="#7368c4"/>
<rect x="3534.2" y="2689.2" width="29.0" height="8.7" fill="#f25b8a"/>
<text transform="translate(3474.0,2768.0) scale(0.9100,1)" font-size="32.99" fill="#5e5e5e">Machi…</text>
<rect x="3615.7" y="2681.9" width="29.0" height="16.0" fill="#06b86d"/>
<rect x="3636.3" y="2686.3" width="29.0" height="11.6" fill="#7368c4"/>
<rect x="3656.9" y="2691.3" width="29.0" height="6.6" fill="#f25b8a"/>
<text transform="translate(3598.4,2768.0) scale(0.9100,1)" font-size="32.99" fill="#5e5e5e">Electr…</text>
<rect x="3738.3" y="2681.9" width="29.0" height="16.0" fill="#06b86d"/>
<rect x="3758.9" y="2689.2" width="29.0" height="8.7" fill="#7368c4"/>
<text transform="translate(3716.1,2768.0) scale(0.9100,1)" font-size="32.99" fill="#5e5e5e">Hardw…</text>
<rect x="3861.0" y="2681.9" width="29.0" height="16.0" fill="#06b86d"/>
<rect x="3881.6" y="2684.1" width="29.0" height="13.8" fill="#7368c4"/>
<rect x="3902.2" y="2689.2" width="29.0" height="8.7" fill="#f25b8a"/>
<text transform="translate(3840.9,2768.0) scale(0.9100,1)" font-size="32.99" fill="#5e5e5e">Other …</text>
<rect x="3983.0" y="2681.9" width="29.0" height="16.0" fill="#06b86d"/>
<rect x="4003.6" y="2681.9" width="29.0" height="16.0" fill="#7368c4"/>
<rect x="4024.2" y="2691.3" width="29.0" height="6.6" fill="#f25b8a"/>
<text transform="translate(3967.1,2768.0) scale(0.9100,1)" font-size="32.99" fill="#5e5e5e">Softw…</text>
<rect x="4105.7" y="2684.1" width="29.0" height="13.8" fill="#06b86d"/>
<rect x="4126.3" y="2686.3" width="29.0" height="11.6" fill="#7368c4"/>
<rect x="4146.9" y="2693.5" width="29.0" height="4.4" fill="#f25b8a"/>
<text transform="translate(4092.4,2768.0) scale(0.9100,1)" font-size="32.99" fill="#5e5e5e">IT an…</text>
<rect x="4228.4" y="2684.1" width="29.0" height="13.8" fill="#06b86d"/>
<rect x="4249.0" y="2684.1" width="29.0" height="13.8" fill="#7368c4"/>
<rect x="4269.6" y="2691.3" width="29.0" height="6.6" fill="#f25b8a"/>
<text transform="translate(4236.0,2768.0) scale(0.9100,1)" font-size="32.99" fill="#5e5e5e">Gas</text>
<circle cx="3471.9" cy="2859.8" r="16" fill="#06b86d"/>
<text transform="translate(3500.5,2871.5) scale(0.9132,1)" font-size="32.99" fill="#5e5e5e">2022</text>
<circle cx="3607.7" cy="2859.8" r="16" fill="#7368c4"/>
<text transform="translate(3636.5,2871.5) scale(0.8841,1)" font-size="32.99" fill="#5e5e5e">2021</text>
<circle cx="3743.4" cy="2859.8" r="16" fill="#f25b8a"/>
<text transform="translate(3771.5,2871.5) scale(0.8942,1)" font-size="32.99" fill="#5e5e5e">2020</text>
<line x1="195.5" y1="3310.4" x2="1422.4" y2="3310.4" stroke="#e8e8e8" stroke-width="2.6"/>
<text transform="translate(71.2,3325.9) scale(0.9400,1)" font-size="32.99" fill="#5e5e5e">125 kt</text>
<line x1="195.5" y1="3476.3" x2="1422.4" y2="3476.3" stroke="#e8e8e8" stroke-width="2.6"/>
<text transform="translate(71.2,3491.8) scale(0.9400,1)" font-size="32.99" fill="#5e5e5e">100 kt</text>
<line x1="195.5" y1="3642.2" x2="1422.4" y2="3642.2" stroke="#e8e8e8" stroke-width="2.6"/>
<text transform="translate(88.5,3657.7) scale(0.9400,1)" font-size="32.99" fill="#5e5e5e">75 kt</text>
<line x1="195.5" y1="3808.1" x2="1422.4" y2="3808.1" stroke="#e8e8e8" stroke-width="2.6"/>
<text transform="translate(88.5,3823.6) scale(0.9400,1)" font-size="32.99" fill="#5e5e5e">50 kt</text>
<line x1="195.5" y1="3974.0" x2="1422.4" y2="3974.0" stroke="#e8e8e8" stroke-width="2.6"/>
<text transform="translate(88.5,3989.5) scale(0.9400,1)" font-size="32.99" fill="#5e5e5e">25 kt</text>
<line x1="195.5" y1="4139.9" x2="1422.4" y2="4139.9" stroke="#e8e8e8" stroke-width="2.6"/>
<text transform="translate(105.7,4155.4) scale(0.9400,1)" font-size="32.99" fill="#5e5e5e">0 kt</text>
<line x1="329.8" y1="4140" x2="329.8" y2="4166" stroke="#e8e8e8" stroke-width="2.6"/>
<text transform="translate(268.8,4208.0) scale(0.9100,1)" font-size="32.99" fill="#5e5e5e">2 m EUR</text>
<line x1="547.6" y1="4140" x2="547.6" y2="4166" stroke="#e8e8e8" stroke-width="2.6"/>
<text transform="translate(486.8,4208.0) scale(0.9100,1)" font-size="32.99" fill="#5e5e5e">3 m EUR</text>
<line x1="764" y1="4140" x2="764" y2="4166" stroke="#e8e8e8" stroke-width="2.6"/>
<text transform="translate(703.5,4208.0) scale(0.9100,1)" font-size="32.99" fill="#5e5e5e">4 m EUR</text>
<line x1="983.2" y1="4140" x2="983.2" y2="4166" stroke="#e8e8e8" stroke-width="2.6"/>
<text transform="translate(922.4,4208.0) scale(0.9100,1)" font-size="32.99" fill="#5e5e5e">5 m EUR</text>
<line x1="1199.5" y1="4140" x2="1199.5" y2="4166" stroke="#e8e8e8" stroke-width="2.6"/>
<text transform="translate(1138.5,4208.0) scale(0.9100,1)" font-size="32.99" fill="#5e5e5e">6 m EUR</text>
<line x1="1418.8" y1="4140" x2="1418.8" y2="4166" stroke="#e8e8e8" stroke-width="2.6"/>
<text transform="translate(1302.0,4208.0) scale(0.9100,1)" font-size="32.99" fill="#5e5e5e">7 m EUR</text>
<circle cx="1410.0" cy="4122.0" r="25.6" fill="#06b86d"/>
<circle cx="1211.9" cy="4109.7" r="25.6" fill="#38d6de"/>
<circle cx="1186.5" cy="4129.3" r="25.6" fill="#4dbdfe"/>
<circle cx="1170.5" cy="4066.1" r="25.6" fill="#1592dc"/>
<circle cx="976.0" cy="4131.5" r="25.6" fill="#7368c4"/>
<circle cx="874.3" cy="3364.8" r="25.6" fill="#b062b8"/>
<circle cx="858.3" cy="4118.4" r="25.6" fill="#d65396"/>
<circle cx="684.0" cy="4116.3" r="25.6" fill="#f25b8a"/>
<circle cx="660.8" cy="4128.7" r="25.6" fill="#ff6e4b"/>
<circle cx="634.5" cy="4121.9" r="25.6" fill="#fd9a45"/>
<circle cx="623.7" cy="4133.7" r="25.6" fill="#f6bb42"/>
<circle cx="598.9" cy="4120.4" r="25.6" fill="#eed64a"/>
<circle cx="592.7" cy="4133.7" r="25.6" fill="#06b86d"/>
<circle cx="509.1" cy="4104.0" r="25.6" fill="#38d6de"/>
<circle cx="417.8" cy="4124.4" r="25.6" fill="#1592dc"/>
<circle cx="396.1" cy="4125.0" r="25.6" fill="#7368c4"/>
<circle cx="373.5" cy="4134.3" r="25.6" fill="#b062b8"/>
<circle cx="264.6" cy="4128.7" r="25.6" fill="#d65396"/>
<circle cx="206.7" cy="4130.6" r="25.6" fill="#f25b8a"/>
<line x1="1647.2" y1="3310.2" x2="2876" y2="3310.2" stroke="#e8e8e8" stroke-width="2.6"/>
<text transform="translate(1524.2,3325.2) scale(0.9400,1)" font-size="32.99" fill="#5e5e5e">125 kt</text>
<line x1="1647.2" y1="3449.5" x2="2876" y2="3449.5" stroke="#e8e8e8" stroke-width="2.6"/>
<text transform="translate(1524.2,3464.5) scale(0.9400,1)" font-size="32.99" fill="#5e5e5e">100 kt</text>
<line x1="1647.2" y1="3588.8" x2="2876" y2="3588.8" stroke="#e8e8e8" stroke-width="2.6"/>
<text transform="translate(1541.5,3603.8) scale(0.9400,1)" font-size="32.99" fill="#5e5e5e">75 kt</text>
<line x1="1647.2" y1="3728.1" x2="2876" y2="3728.1" stroke="#e8e8e8" stroke-width="2.6"/>
<text transform="translate(1541.5,3743.1) scale(0.9400,1)" font-size="32.99" fill="#5e5e5e">50 kt</text>
<line x1="1647.2" y1="3867.4" x2="2876" y2="3867.4" stroke="#e8e8e8" stroke-width="2.6"/>
<text transform="translate(1541.5,3882.4) scale(0.9400,1)" font-size="32.99" fill="#5e5e5e">25 kt</text>
<line x1="1647.2" y1="4006.7" x2="2876" y2="4006.7" stroke="#e8e8e8" stroke-width="2.6"/>
<text transform="translate(1558.7,4021.7) scale(0.9400,1)" font-size="32.99" fill="#5e5e5e">0 kt</text>
<rect x="1666.0" y="3355.9" width="85.5" height="650.8" fill="#06b86d"/>
<text transform="translate(1650.1,4077.6) scale(0.9100,1)" font-size="32.99" fill="#5e5e5e">SWED…</text>
<rect x="1788.7" y="3947.4" width="85.5" height="59.3" fill="#06b86d"/>
<text transform="translate(1775.3,4077.6) scale(0.9100,1)" font-size="32.99" fill="#5e5e5e">QBRA…</text>
<rect x="1911.4" y="3979.3" width="85.5" height="27.4" fill="#06b86d"/>
<text transform="translate(1897.4,4077.6) scale(0.9100,1)" font-size="32.99" fill="#5e5e5e">PROS…</text>
<rect x="2034.1" y="3984.4" width="85.5" height="22.3" fill="#06b86d"/>
<text transform="translate(2021.0,4077.6) scale(0.9100,1)" font-size="32.99" fill="#5e5e5e">KERR…</text>
<rect x="2156.8" y="3988.8" width="85.5" height="17.9" fill="#06b86d"/>
<text transform="translate(2143.9,4077.6) scale(0.9100,1)" font-size="32.99" fill="#5e5e5e">QUORA</text>
<rect x="2279.5" y="3992.4" width="85.5" height="14.3" fill="#06b86d"/>
<text transform="translate(2267.6,4077.6) scale(0.9100,1)" font-size="32.99" fill="#5e5e5e">METRO</text>
<rect x="2402.2" y="3995.3" width="85.5" height="11.4" fill="#06b86d"/>
<text transform="translate(2390.6,4077.6) scale(0.9100,1)" font-size="32.99" fill="#5e5e5e">ITELL…</text>
<rect x="2524.9" y="3995.3" width="85.5" height="11.4" fill="#06b86d"/>
<text transform="translate(2510.1,4077.6) scale(0.9100,1)" font-size="32.99" fill="#5e5e5e">PROD…</text>
<rect x="2647.6" y="3995.3" width="85.5" height="11.4" fill="#06b86d"/>
<text transform="translate(2630.0,4077.6) scale(0.9100,1)" font-size="32.99" fill="#5e5e5e">SIEME…</text>
<rect x="2770.3" y="3997.5" width="85.5" height="9.2" fill="#06b86d"/>
<text transform="translate(2762.7,4077.6) scale(0.9100,1)" font-size="32.99" fill="#5e5e5e">CHIN…</text>
<polyline points="1708.9,3906.8 1830.7,3917.7 1953.9,4001.1 2076.4,3912.6 2199,4001.1 2325,4001.1 2446.2,3923.5 2569.4,4001.1 2692,3995.3 2814.4,3968.5" fill="none" stroke="#7368c4" stroke-width="3.4" stroke-linejoin="round"/>
<circle cx="1708.9" cy="3906.8" r="9.4" fill="#7368c4"/>
<circle cx="1830.7" cy="3917.7" r="9.4" fill="#7368c4"/>
<circle cx="1953.9" cy="4001.1" r="9.4" fill="#7368c4"/>
<circle cx="2076.4" cy="3912.6" r="9.4" fill="#7368c4"/>
<circle cx="2199.0" cy="4001.1" r="9.4" fill="#7368c4"/>
<circle cx="2325.0" cy="4001.1" r="9.4" fill="#7368c4"/>
<circle cx="2446.2" cy="3923.5" r="9.4" fill="#7368c4"/>
<circle cx="2569.4" cy="4001.1" r="9.4" fill="#7368c4"/>
<circle cx="2692.0" cy="3995.3" r="9.4" fill="#7368c4"/>
<circle cx="2814.4" cy="3968.5" r="9.4" fill="#7368c4"/>
<circle cx="1869.8" cy="4170.0" r="16" fill="#06b86d"/>
<text transform="translate(1896.9,4181.5) scale(0.9594,1)" font-size="32.99" fill="#5e5e5e">Emissions</text>
<line x1="2069" y1="4170" x2="2099" y2="4170" stroke="#7368c4" stroke-width="3.4"/>
<circle cx="2083.7" cy="4170.0" r="9.4" fill="#7368c4"/>
<text transform="translate(2111.2,4181.5) scale(0.9147,1)" font-size="32.99" fill="#5e5e5e">CO2e Target For Supplier Value</text>
<line x1="3099.5" y1="3310.3" x2="4327.9" y2="3310.3" stroke="#e8e8e8" stroke-width="2.6"/>
<text transform="translate(2976.7,3325.3) scale(0.9400,1)" font-size="32.99" fill="#5e5e5e">125 kt</text>
<line x1="3099.5" y1="3449.8" x2="4327.9" y2="3449.8" stroke="#e8e8e8" stroke-width="2.6"/>
<text transform="translate(2976.7,3464.8) scale(0.9400,1)" font-size="32.99" fill="#5e5e5e">100 kt</text>
<line x1="3099.5" y1="3589.3" x2="4327.9" y2="3589.3" stroke="#e8e8e8" stroke-width="2.6"/>
<text transform="translate(2994.0,3604.3) scale(0.9400,1)" font-size="32.99" fill="#5e5e5e">75 kt</text>
<line x1="3099.5" y1="3728.8" x2="4327.9" y2="3728.8" stroke="#e8e8e8" stroke-width="2.6"/>
<text transform="translate(2994.0,3743.8) scale(0.9400,1)" font-size="32.99" fill="#5e5e5e">50 kt</text>
<line x1="3099.5" y1="3868.3" x2="4327.9" y2="3868.3" stroke="#e8e8e8" stroke-width="2.6"/>
<text transform="translate(2994.0,3883.3) scale(0.9400,1)" font-size="32.99" fill="#5e5e5e">25 kt</text>
<line x1="3099.5" y1="4007.8" x2="4327.9" y2="4007.8" stroke="#e8e8e8" stroke-width="2.6"/>
<text transform="translate(3011.2,4022.8) scale(0.9400,1)" font-size="32.99" fill="#5e5e5e">0 kt</text>
<rect x="3127.0" y="3356.1" width="29.0" height="651.9" fill="#06b86d"/>
<rect x="3147.6" y="3526.0" width="29.0" height="482.0" fill="#7368c4"/>
<rect x="3168.2" y="3608.7" width="29.0" height="399.3" fill="#f25b8a"/>
<text transform="translate(3103.7,4078.8) scale(0.9100,1)" font-size="32.99" fill="#5e5e5e">SWED…</text>
<rect x="3249.7" y="3947.8" width="29.0" height="60.2" fill="#06b86d"/>
<rect x="3270.3" y="3971.7" width="29.0" height="36.3" fill="#7368c4"/>
<rect x="3290.9" y="3974.6" width="29.0" height="33.4" fill="#f25b8a"/>
<text transform="translate(3228.8,4078.8) scale(0.9100,1)" font-size="32.99" fill="#5e5e5e">QBRA…</text>
<rect x="3372.4" y="3979.0" width="29.0" height="29.0" fill="#06b86d"/>
<rect x="3393.0" y="3979.0" width="29.0" height="29.0" fill="#7368c4"/>
<rect x="3413.6" y="3981.9" width="29.0" height="26.1" fill="#f25b8a"/>
<text transform="translate(3351.0,4078.8) scale(0.9100,1)" font-size="32.99" fill="#5e5e5e">PROS…</text>
<rect x="3496.6" y="3984.1" width="29.0" height="23.9" fill="#06b86d"/>
<rect x="3517.2" y="3984.1" width="29.0" height="23.9" fill="#7368c4"/>
<rect x="3537.8" y="3997.2" width="29.0" height="10.8" fill="#f25b8a"/>
<text transform="translate(3476.0,4078.8) scale(0.9100,1)" font-size="32.99" fill="#5e5e5e">KERR…</text>
<rect x="3619.3" y="3989.2" width="29.0" height="18.8" fill="#06b86d"/>
<rect x="3639.9" y="3989.2" width="29.0" height="18.8" fill="#7368c4"/>
<rect x="3660.5" y="4000.1" width="29.0" height="7.9" fill="#f25b8a"/>
<text transform="translate(3598.8,4078.8) scale(0.9100,1)" font-size="32.99" fill="#5e5e5e">QUORA</text>
<rect x="3742.0" y="3992.8" width="29.0" height="15.2" fill="#06b86d"/>
<rect x="3762.6" y="3992.8" width="29.0" height="15.2" fill="#7368c4"/>
<rect x="3783.2" y="3997.2" width="29.0" height="10.8" fill="#f25b8a"/>
<text transform="translate(3722.6,4078.8) scale(0.9100,1)" font-size="32.99" fill="#5e5e5e">METRO</text>
<rect x="3864.7" y="3995.0" width="29.0" height="13.0" fill="#06b86d"/>
<rect x="3885.3" y="4000.1" width="29.0" height="7.9" fill="#7368c4"/>
<rect x="3905.9" y="4000.1" width="29.0" height="7.9" fill="#f25b8a"/>
<text transform="translate(3845.6,4078.8) scale(0.9100,1)" font-size="32.99" fill="#5e5e5e">ITELL…</text>
<rect x="3987.4" y="3995.0" width="29.0" height="13.0" fill="#06b86d"/>
<rect x="4008.0" y="3997.2" width="29.0" height="10.8" fill="#7368c4"/>
<rect x="4028.6" y="4003.7" width="29.0" height="4.3" fill="#f25b8a"/>
<text transform="translate(3965.1,4078.8) scale(0.9100,1)" font-size="32.99" fill="#5e5e5e">PROD…</text>
<rect x="4110.1" y="3995.0" width="29.0" height="13.0" fill="#06b86d"/>
<rect x="4130.7" y="3995.0" width="29.0" height="13.0" fill="#7368c4"/>
<text transform="translate(4085.0,4078.8) scale(0.9100,1)" font-size="32.99" fill="#5e5e5e">SIEME…</text>
<rect x="4232.0" y="3997.2" width="29.0" height="10.8" fill="#06b86d"/>
<rect x="4252.6" y="3997.2" width="29.0" height="10.8" fill="#7368c4"/>
<rect x="4273.2" y="4000.1" width="29.0" height="7.9" fill="#f25b8a"/>
<text transform="translate(4216.9,4078.8) scale(0.9100,1)" font-size="32.99" fill="#5e5e5e">CHIN…</text>
<circle cx="3475.5" cy="4170.7" r="16" fill="#06b86d"/>
<text transform="translate(3504.5,4182.3) scale(0.9132,1)" font-size="32.99" fill="#5e5e5e">2022</text>
<circle cx="3612.0" cy="4170.7" r="16" fill="#7368c4"/>
<text transform="translate(3640.3,4182.3) scale(0.8841,1)" font-size="32.99" fill="#5e5e5e">2021</text>
<circle cx="3747.8" cy="4170.7" r="16" fill="#f25b8a"/>
<text transform="translate(3775.3,4182.3) scale(0.8942,1)" font-size="32.99" fill="#5e5e5e">2020</text>
<polygon points="3108.6,863.8 3128.4,867.6 3153.2,861.4 3173.0,862.6 3195.3,866.3 3207.7,873.7 3232.4,881.2 3249.8,876.2 3269.6,878.7 3289.4,883.7 3301.8,878.7 3306.7,888.6 3289.4,910.9 3282.0,918.3 3284.5,933.2 3311.7,948.0 3326.6,953.0 3334.0,965.4 3338.9,958.0 3346.4,935.7 3346.4,918.3 3356.3,913.4 3376.1,918.3 3395.9,938.1 3410.8,953.0 3423.2,967.9 3433.1,985.2 3413.3,990.2 3400.9,1000.1 3386.0,1002.5 3376.1,990.2 3356.3,1002.5 3338.9,1010.0 3324.1,1012.4 3319.1,1002.5 3306.7,997.6 3301.8,987.7 3279.5,980.2 3178.0,980.2 3168.0,970.3 3148.2,955.5 3128.4,928.2 3113.6,920.8 3108.6,920.8" fill="#f4f4f4" stroke="#e0e0e0" stroke-width="1.6" stroke-linejoin="round"/>
<polygon points="3282.0,910.9 3301.8,901.0 3316.7,891.1 3329.0,878.7 3338.9,868.8 3346.4,878.7 3343.9,901.0 3346.4,918.3 3341.4,938.1 3336.5,953.0 3331.5,965.4 3324.1,953.0 3306.7,943.1 3286.9,935.7 3279.5,923.3" fill="#fff" stroke="#e0e0e0" stroke-width="1.6" stroke-linejoin="round"/>
<polygon points="3165.6,846.5 3175.5,831.6 3197.8,829.2 3210.2,839.1 3230.0,836.6 3244.8,839.1 3242.4,853.9 3232.4,868.8 3217.6,873.7 3197.8,868.8 3182.9,851.5" fill="#f4f4f4" stroke="#e0e0e0" stroke-width="1.6" stroke-linejoin="round"/>
<polygon points="3178.0,819.3 3192.8,809.3 3210.2,804.4 3227.5,799.4 3239.9,814.3 3232.4,824.2 3207.7,826.7 3187.9,824.2" fill="#f4f4f4" stroke="#e0e0e0" stroke-width="1.6" stroke-linejoin="round"/>
<polygon points="3239.9,794.5 3257.2,789.5 3274.6,801.9 3289.4,814.3 3282.0,826.7 3257.2,824.2 3244.8,814.3" fill="#f4f4f4" stroke="#e0e0e0" stroke-width="1.6" stroke-linejoin="round"/>
<polygon points="3272.1,784.6 3289.4,772.2 3319.1,762.3 3356.3,759.8 3395.9,764.8 3381.1,777.2 3361.2,794.5 3341.4,811.8 3326.6,824.2 3301.8,829.2 3289.4,814.3 3277.0,799.4" fill="#f4f4f4" stroke="#e0e0e0" stroke-width="1.6" stroke-linejoin="round"/>
<polygon points="3249.8,836.6 3269.6,831.6 3289.4,844.0 3282.0,868.8 3262.2,868.8 3252.3,856.4" fill="#f4f4f4" stroke="#e0e0e0" stroke-width="1.6" stroke-linejoin="round"/>
<polygon points="3299.3,839.1 3319.1,834.1 3343.9,836.6 3361.2,851.5 3381.1,863.8 3400.9,881.2 3398.4,901.0 3386.0,913.4 3376.1,903.5 3361.2,891.1 3346.4,878.7 3331.5,863.8 3306.7,856.4" fill="#f4f4f4" stroke="#e0e0e0" stroke-width="1.6" stroke-linejoin="round"/>
<polygon points="3018.2,870.0 3034.3,858.9 3054.1,853.9 3078.9,858.9 3108.6,863.8 3108.6,920.8 3098.7,919.6 3083.8,917.1 3073.9,915.9 3064.0,923.3 3059.1,930.7 3044.2,943.1 3024.4,953.0 3007.1,960.4 3024.4,945.6 3044.2,930.7 3031.8,923.3 3017.0,920.8 3021.9,908.4 3034.3,901.0 3021.9,898.5 3012.0,888.6 3026.9,883.7 3019.4,876.2" fill="#a6e5cb" stroke="#e0e0e0" stroke-width="1.6" stroke-linejoin="round"/>
<polygon points="3173.0,980.2 3279.5,980.2 3291.9,987.7 3306.7,995.1 3311.7,1010.0 3321.6,1007.5 3326.6,1012.4 3346.4,1007.5 3366.2,1000.1 3378.6,990.2 3376.1,1002.5 3356.3,1014.9 3348.9,1024.8 3346.4,1037.2 3336.5,1047.1 3326.6,1059.5 3331.5,1076.8 3324.1,1069.4 3316.7,1059.5 3296.8,1062.0 3279.5,1059.5 3269.6,1071.9 3257.2,1062.0 3242.4,1052.1 3220.1,1049.6 3205.2,1049.6 3187.9,1039.7 3175.5,1017.4 3170.5,1000.1" fill="#a6e5cb" stroke="#e0e0e0" stroke-width="1.6" stroke-linejoin="round"/>
<polygon points="3304.3,992.6 3311.7,990.2 3316.7,1002.5 3309.2,1010.0" fill="#fff" stroke="#e0e0e0" stroke-width="1.2" stroke-linejoin="round"/>
<polygon points="3319.1,1000.1 3331.5,997.6 3336.5,1005.0 3324.1,1007.5" fill="#fff" stroke="#e0e0e0" stroke-width="1.2" stroke-linejoin="round"/>
<polygon points="3187.9,1039.7 3269.6,1071.9 3269.3,1084.8 3274.3,1099.6 3284.2,1104.6 3294.1,1102.1 3296.6,1094.7 3309.0,1092.2 3306.5,1109.5 3316.4,1119.4 3326.3,1129.3 3337.5,1139.3 3333.7,1145.4 3321.4,1139.3 3304.0,1129.3 3289.2,1121.9 3271.8,1113.3 3252.0,1107.1 3237.2,1094.7 3222.3,1079.8 3207.4,1065.0 3195.0,1050.1" fill="#f4f4f4" stroke="#e0e0e0" stroke-width="1.6" stroke-linejoin="round"/>
<polygon points="3316.4,1088.5 3333.7,1087.2 3348.6,1094.7 3358.5,1099.6 3346.1,1099.6 3328.8,1092.2" fill="#f4f4f4" stroke="#e0e0e0" stroke-width="1.2" stroke-linejoin="round"/>
<polygon points="3356.0,1102.1 3373.4,1102.1 3378.3,1107.1 3361.0,1107.1" fill="#f4f4f4" stroke="#e0e0e0" stroke-width="1.2" stroke-linejoin="round"/>
<polygon points="3361.2,799.4 3381.0,777.2 3405.8,766.0 3440.0,764.8 3464.8,759.3 3501.9,756.1 3539.1,758.6 3586.1,774.7 3563.8,789.5 3556.4,814.3 3549.0,834.1 3539.1,858.9 3514.3,873.7 3489.5,888.6 3474.7,908.4 3464.8,923.3 3454.9,915.9 3445.0,898.5 3435.5,878.7 3425.6,851.5 3415.7,819.3 3381.0,809.4" fill="#f4f4f4" stroke="#e0e0e0" stroke-width="1.6" stroke-linejoin="round"/>
<polygon points="3539.1,888.6 3551.5,883.7 3573.7,886.1 3578.7,893.6 3563.8,902.2 3546.5,901.0" fill="#f4f4f4" stroke="#e0e0e0" stroke-width="1.6" stroke-linejoin="round"/>
<polygon points="3338.7,1141.7 3348.6,1131.8 3363.5,1126.9 3383.3,1134.3 3403.1,1134.3 3410.5,1146.7 3427.9,1151.6 3437.8,1156.6 3445.2,1173.9 3477.4,1181.4 3499.7,1193.7 3499.7,1208.6 3484.8,1223.5 3479.9,1248.2 3470.0,1258.1 3455.1,1263.1 3447.7,1278.0 3432.8,1297.8 3418.0,1307.7 3418.0,1317.6 3403.1,1322.5 3393.2,1330.0 3388.2,1344.8 3378.3,1357.2 3373.4,1372.1 3388.2,1394.4 3373.4,1400.1 3358.5,1389.4 3348.6,1367.1 3353.6,1339.9 3358.5,1307.7 3365.9,1273.0 3370.9,1238.3 3353.6,1230.9 3341.2,1213.6 3328.8,1188.8 3331.3,1171.5 3341.2,1159.1" fill="#f4f4f4" stroke="#e0e0e0" stroke-width="1.6" stroke-linejoin="round"/>
<polygon points="3405.6,1379.5 3415.5,1380.7 3413.0,1383.2 3404.3,1383.2" fill="#f4f4f4" stroke="#e0e0e0" stroke-width="1.2" stroke-linejoin="round"/>
<polyline points="3358.5,1198.7 3388.2,1208.6 3405.6,1223.5 3415.5,1233.4 3418.0,1248.2 3405.6,1253.2 3415.5,1268.0 3430.3,1270.5 3418.0,1287.9 3430.3,1295.3" fill="none" stroke="#e0e0e0" stroke-width="1.4" stroke-linejoin="round"/>
<polyline points="3370.9,1238.3 3370.9,1282.9 3363.5,1332.4 3358.5,1382.0" fill="none" stroke="#e0e0e0" stroke-width="1.4" stroke-linejoin="round"/>
<polyline points="3373.4,1223.5 3388.2,1255.7 3405.6,1253.2" fill="none" stroke="#e0e0e0" stroke-width="1.4" stroke-linejoin="round"/>
<polyline points="3361.0,1141.7 3370.9,1169.0 3403.1,1154.1 3410.5,1146.7" fill="none" stroke="#e0e0e0" stroke-width="1.4" stroke-linejoin="round"/>
<polyline points="3331.3,1171.5 3351.1,1176.4 3370.9,1188.8 3358.5,1198.7" fill="none" stroke="#e0e0e0" stroke-width="1.4" stroke-linejoin="round"/>
<polyline points="3388.2,1255.7 3415.5,1265.6 3418.0,1307.7" fill="none" stroke="#e0e0e0" stroke-width="1.4" stroke-linejoin="round"/>
<polygon points="3593.6,1032.3 3593.6,1002.5 3613.4,1002.5 3623.3,987.7 3610.9,977.8 3633.2,972.8 3645.6,962.9 3655.5,953.0 3660.4,943.1 3658.0,935.7 3653.0,928.2 3645.6,913.4 3655.5,898.5 3670.3,883.7 3682.7,868.8 3700.1,858.9 3724.8,855.2 3739.7,858.9 3762.0,868.8 3779.3,878.7 3791.7,873.7 3811.5,866.3 3846.2,861.4 3861.1,868.8 3875.9,858.9 3885.8,839.1 3898.2,844.0 3920.0,844.0 3900.0,841.5 3924.8,836.6 3944.6,824.2 3979.3,814.3 4004.0,806.9 4043.7,816.8 4041.2,834.1 4048.6,836.6 4083.3,836.6 4103.1,846.5 4110.5,856.4 4142.7,844.0 4172.4,849.0 4197.2,856.4 4214.6,858.9 4222.0,866.3 4251.7,861.4 4286.4,866.3 4306.2,878.7 4323.5,886.1 4313.6,896.0 4291.3,888.6 4281.4,901.0 4286.4,908.4 4266.6,913.4 4251.7,923.3 4231.9,923.3 4226.9,910.9 4214.6,913.4 4197.2,928.2 4147.7,925.8 4122.9,948.0 4135.3,955.5 4145.2,955.5 4142.7,977.8 4132.8,997.6 4118.0,1007.5 4098.1,1017.4 4088.2,1022.4 4103.1,1024.8 4098.1,1042.2 4090.7,1047.1 4085.8,1029.8 4073.4,1027.3 4061.0,1024.8 4073.4,1039.7 4078.3,1062.0 4075.7,1057.3 4068.2,1079.6 4050.9,1089.5 4033.6,1095.7 4026.1,1101.9 4028.6,1121.7 4018.7,1136.6 4011.3,1134.1 4001.4,1121.7 3993.9,1116.8 3989.0,1126.7 3991.5,1144.0 3998.9,1156.4 3996.4,1160.1 3989.0,1146.5 3984.0,1121.7 3974.1,1114.3 3966.7,1089.5 3954.3,1077.2 3949.3,1092.0 3929.5,1109.3 3916.2,1143.5 3896.3,1109.0 3888.9,1089.2 3881.4,1071.8 3859.1,1066.9 3834.4,1066.9 3819.5,1058.2 3807.1,1059.4 3822.0,1074.3 3831.9,1079.3 3846.7,1089.2 3831.9,1104.0 3797.2,1116.4 3787.3,1123.8 3772.4,1099.1 3762.5,1079.3 3757.6,1061.9 3757.7,1052.7 3759.9,1035.4 3753.4,1031.0 3731.7,1031.0 3729.5,1022.4 3723.0,1024.5 3727.4,1035.4 3718.7,1037.5 3710.0,1026.7 3701.4,1013.7 3684.0,998.5 3673.2,992.0 3681.9,1002.9 3694.9,1013.7 3701.4,1024.5 3692.7,1031.0 3684.0,1018.0 3671.0,1005.0 3662.4,996.4 3645.0,1005.0 3632.0,1015.9 3623.3,1031.0 3610.3,1035.4 3593.7,1032.3" fill="#f4f4f4" stroke="#e0e0e0" stroke-width="1.6" stroke-linejoin="round"/>
<polygon points="3732.3,997.6 3747.1,992.6 3769.4,1000.1 3776.8,1010.0 3757.0,1012.4 3734.7,1010.0" fill="#fff" stroke="#e0e0e0" stroke-width="1.4" stroke-linejoin="round"/>
<polygon points="3806.6,990.2 3818.9,987.7 3821.4,1007.5 3816.5,1029.8 3809.0,1027.3 3811.5,1007.5" fill="#fff" stroke="#e0e0e0" stroke-width="1.4" stroke-linejoin="round"/>
<polygon points="3685.2,938.1 3697.6,918.3 3707.5,903.5 3697.6,898.5 3707.5,888.6 3714.9,901.0 3710.0,918.3 3724.8,922.0 3714.9,935.7 3702.5,945.6 3687.7,950.5" fill="#fff" stroke="#e0e0e0" stroke-width="1.4" stroke-linejoin="round"/>
<polygon points="3807.1,1059.4 3819.5,1061.9 3831.9,1076.8 3824.5,1081.7 3812.1,1071.8" fill="#fff" stroke="#e0e0e0" stroke-width="1.2" stroke-linejoin="round"/>
<polygon points="3634.2,1011.5 3639.6,1010.4 3640.7,1022.4 3635.3,1023.4" fill="#f4f4f4" stroke="#e0e0e0" stroke-width="1.2" stroke-linejoin="round"/>
<polygon points="3675.4,1031.0 3688.4,1029.9 3686.2,1035.4 3676.4,1035.4" fill="#f4f4f4" stroke="#e0e0e0" stroke-width="1.2" stroke-linejoin="round"/>
<polygon points="3667.9,789.5 3687.7,784.6 3724.8,787.1 3712.4,809.3 3687.7,814.3 3672.8,801.9" fill="#f4f4f4" stroke="#e0e0e0" stroke-width="1.6" stroke-linejoin="round"/>
<polygon points="3791.7,782.1 3823.9,774.7 3866.0,777.2 3836.3,789.5 3801.6,787.1" fill="#f4f4f4" stroke="#e0e0e0" stroke-width="1.6" stroke-linejoin="round"/>
<polygon points="3816.5,849.0 3836.3,829.2 3861.1,816.8 3880.9,811.8 3861.1,821.7 3841.2,839.1 3826.4,856.4" fill="#f4f4f4" stroke="#e0e0e0" stroke-width="1.6" stroke-linejoin="round"/>
<polygon points="3961.9,787.1 3979.3,777.2 4018.9,801.9 3994.1,804.4 3964.4,794.5" fill="#f4f4f4" stroke="#e0e0e0" stroke-width="1.6" stroke-linejoin="round"/>
<polygon points="4125.4,821.7 4147.7,816.8 4179.9,826.7 4162.5,829.2 4130.3,829.2" fill="#f4f4f4" stroke="#e0e0e0" stroke-width="1.6" stroke-linejoin="round"/>
<polygon points="4197.2,972.8 4199.7,943.1 4217.0,918.3 4231.9,908.4 4226.9,928.2 4222.0,943.1 4212.1,958.0" fill="#f4f4f4" stroke="#e0e0e0" stroke-width="1.6" stroke-linejoin="round"/>
<polygon points="4147.7,953.0 4155.1,970.3 4152.6,987.7 4146.4,990.2 4145.2,970.3" fill="#f4f4f4" stroke="#e0e0e0" stroke-width="1.6" stroke-linejoin="round"/>
<polygon points="4103.1,1049.6 4122.9,1032.3 4137.8,1017.4 4145.2,1002.5 4147.7,987.7 4150.2,1010.0 4179.9,990.2 4147.7,1007.5 4145.2,1032.3 4127.9,1044.6 4108.0,1057.0" fill="#f4f4f4" stroke="#e0e0e0" stroke-width="1.6" stroke-linejoin="round"/>
<polygon points="3591.1,953.0 3603.5,950.5 3605.9,960.4 3601.0,965.4 3589.8,965.4" fill="#f4f4f4" stroke="#e0e0e0" stroke-width="1.6" stroke-linejoin="round"/>
<polygon points="3610.9,933.2 3618.3,935.7 3615.9,945.6 3623.3,950.5 3630.7,960.4 3633.2,964.1 3623.3,967.9 3613.4,967.9 3618.3,958.0 3610.9,948.0 3608.4,938.1" fill="#63d3a3" stroke="#e0e0e0" stroke-width="1.6" stroke-linejoin="round"/>
<polygon points="3675.3,903.5 3685.2,886.1 3697.6,873.7 3712.4,875.0 3713.7,883.7 3702.5,898.5 3695.1,913.4 3692.6,923.3 3687.7,935.7 3680.2,943.1 3674.1,935.7 3674.1,920.8" fill="#4ccb93" stroke="#e0e0e0" stroke-width="1.6" stroke-linejoin="round"/>
<polygon points="3655.5,958.0 3670.3,953.0 3680.2,958.0 3679.0,970.3 3672.8,982.7 3660.4,982.7 3653.0,970.3" fill="#63d3a3" stroke="#e0e0e0" stroke-width="1.6" stroke-linejoin="round"/>
<polygon points="3708.7,938.1 3719.9,935.7 3727.3,940.6 3712.4,941.1" fill="#63d3a3" stroke="#e0e0e0" stroke-width="1.0" stroke-linejoin="round"/>
<polyline points="3707.5,898.5 3714.9,881.2 3737.2,878.7 3742.2,898.5 3737.2,918.3 3714.9,920.8" fill="none" stroke="#e0e0e0" stroke-width="1.4" stroke-linejoin="round"/>
<polyline points="3680.2,958.0 3712.4,958.0 3719.9,948.0 3747.1,953.0 3774.4,977.8 3762.0,987.7" fill="none" stroke="#e0e0e0" stroke-width="1.4" stroke-linejoin="round"/>
<polyline points="3679.0,970.3 3712.4,972.8 3712.4,987.7 3737.2,987.7" fill="none" stroke="#e0e0e0" stroke-width="1.4" stroke-linejoin="round"/>
<polyline points="3653.0,970.3 3625.8,985.2 3618.3,1000.1" fill="none" stroke="#e0e0e0" stroke-width="1.4" stroke-linejoin="round"/>
<polyline points="3672.8,982.7 3687.7,997.6 3707.5,1007.5 3729.8,1019.9" fill="none" stroke="#e0e0e0" stroke-width="1.4" stroke-linejoin="round"/>
<polyline points="3774.4,977.8 3799.1,967.9 3848.7,955.5 3920.0,962.9" fill="none" stroke="#e0e0e0" stroke-width="1.4" stroke-linejoin="round"/>
<polyline points="3900.0,953.0 3922.3,967.9 3949.5,972.8 3989.2,962.9 4033.7,975.3 4068.4,958.0 4093.2,962.9 4113.0,982.7 4118.0,1002.5" fill="none" stroke="#e0e0e0" stroke-width="1.4" stroke-linejoin="round"/>
<polyline points="3949.5,972.8 3961.9,992.6 3981.7,1005.0 4011.5,1010.0 4036.2,1002.5 4063.5,985.2 4068.4,958.0" fill="none" stroke="#e0e0e0" stroke-width="1.4" stroke-linejoin="round"/>
<polyline points="3900.0,1002.5 3924.8,997.6 3939.6,982.7 3949.5,972.8" fill="none" stroke="#e0e0e0" stroke-width="1.4" stroke-linejoin="round"/>
<polyline points="3789.8,1029.7 3809.6,1022.3 3834.4,1037.2 3851.7,1027.2 3876.5,1014.9" fill="none" stroke="#e0e0e0" stroke-width="1.4" stroke-linejoin="round"/>
<polyline points="3851.7,1027.2 3851.7,1059.4" fill="none" stroke="#e0e0e0" stroke-width="1.4" stroke-linejoin="round"/>
<polyline points="3896.3,1039.6 3921.1,1054.5 3955.7,1069.3" fill="none" stroke="#e0e0e0" stroke-width="1.4" stroke-linejoin="round"/>
<polyline points="3822.0,1014.9 3822.0,1037.2" fill="none" stroke="#e0e0e0" stroke-width="1.4" stroke-linejoin="round"/>
<polygon points="3608.2,1037.4 3638.7,1034.7 3666.7,1031.0 3670.9,1041.9 3699.1,1052.8 3720.7,1050.5 3748.9,1055.0 3755.1,1055.7 3765.0,1086.7 3782.4,1116.4 3789.8,1128.8 3804.6,1131.3 3815.8,1130.0 3807.1,1148.6 3792.3,1163.5 3772.4,1185.8 3772.4,1205.6 3777.4,1227.9 3762.5,1237.8 3752.6,1262.5 3742.7,1277.4 3730.3,1297.2 3698.1,1304.6 3688.2,1279.9 3678.3,1247.7 3670.9,1232.8 3673.4,1213.0 3663.5,1178.3 3658.5,1168.4 3648.6,1156.0 3633.7,1153.6 3618.9,1156.0 3599.1,1156.0 3579.3,1141.2 3564.4,1118.9 3566.9,1094.1 3574.3,1079.3 3589.2,1061.9 3594.1,1049.5" fill="#f4f4f4" stroke="#e0e0e0" stroke-width="1.6" stroke-linejoin="round"/>
<polygon points="3787.3,1265.0 3789.8,1232.8 3809.6,1218.0 3812.1,1227.9 3799.7,1267.5" fill="#f4f4f4" stroke="#e0e0e0" stroke-width="1.6" stroke-linejoin="round"/>
<polyline points="3604.0,1079.3 3641.2,1101.5 3668.4,1086.7 3683.3,1086.7 3718.0,1099.1 3718.0,1054.5" fill="none" stroke="#e0e0e0" stroke-width="1.4" stroke-linejoin="round"/>
<polyline points="3718.0,1091.6 3762.5,1091.6" fill="none" stroke="#e0e0e0" stroke-width="1.4" stroke-linejoin="round"/>
<polyline points="3683.3,1086.7 3685.8,1123.8 3710.5,1133.7 3718.0,1148.6 3752.6,1158.5 3779.9,1158.5" fill="none" stroke="#e0e0e0" stroke-width="1.4" stroke-linejoin="round"/>
<polyline points="3566.9,1116.4 3609.0,1113.9 3641.2,1116.4 3673.4,1126.3 3710.5,1133.7" fill="none" stroke="#e0e0e0" stroke-width="1.4" stroke-linejoin="round"/>
<polyline points="3643.7,1123.8 3643.7,1153.6" fill="none" stroke="#e0e0e0" stroke-width="1.4" stroke-linejoin="round"/>
<polyline points="3710.5,1133.7 3750.2,1128.8 3762.5,1106.5" fill="none" stroke="#e0e0e0" stroke-width="1.4" stroke-linejoin="round"/>
<polyline points="3663.5,1178.3 3693.2,1158.5 3732.8,1153.6 3752.6,1161.0 3772.4,1178.3" fill="none" stroke="#e0e0e0" stroke-width="1.4" stroke-linejoin="round"/>
<polyline points="3673.4,1193.2 3703.1,1195.7 3713.0,1218.0 3732.8,1213.0 3747.7,1230.3" fill="none" stroke="#e0e0e0" stroke-width="1.4" stroke-linejoin="round"/>
<polyline points="3673.4,1235.3 3703.1,1240.2 3722.9,1237.8 3747.7,1257.6" fill="none" stroke="#e0e0e0" stroke-width="1.4" stroke-linejoin="round"/>
<polyline points="3703.1,1240.2 3703.1,1272.4" fill="none" stroke="#e0e0e0" stroke-width="1.4" stroke-linejoin="round"/>
<polyline points="3772.4,1210.5 3752.6,1215.5 3747.7,1247.7" fill="none" stroke="#e0e0e0" stroke-width="1.4" stroke-linejoin="round"/>
<polyline points="3663.5,1029.7 3663.5,1069.3 3668.4,1086.7" fill="none" stroke="#e0e0e0" stroke-width="1.4" stroke-linejoin="round"/>
<polyline points="3623.8,1044.6 3609.0,1061.9 3599.1,1079.3" fill="none" stroke="#e0e0e0" stroke-width="1.4" stroke-linejoin="round"/>
<polyline points="3777.4,1163.5 3752.6,1158.5 3752.6,1173.4 3737.8,1193.2" fill="none" stroke="#e0e0e0" stroke-width="1.4" stroke-linejoin="round"/>
<polygon points="3746.9,1057.0 3753.4,1058.1 3768.6,1087.4 3785.9,1122.1 3788.1,1130.7 3781.6,1128.6 3766.4,1098.2 3751.2,1070.0" fill="#fff" stroke="#e0e0e0" stroke-width="1.2" stroke-linejoin="round"/>
<polyline points="3881.4,1071.8 3886.4,1049.5 3901.2,1039.6 3921.1,1054.5 3953.3,1069.3 3958.2,1081.7" fill="none" stroke="#e0e0e0" stroke-width="1.4" stroke-linejoin="round"/>
<polygon points="3976.6,1151.5 3991.5,1161.4 4008.8,1178.7 4018.7,1193.6 4013.7,1198.5 3998.9,1186.1 3984.0,1168.8" fill="#f4f4f4" stroke="#e0e0e0" stroke-width="1.6" stroke-linejoin="round"/>
<polygon points="4016.2,1196.0 4053.4,1201.0 4093.0,1203.5 4090.5,1208.4 4053.4,1205.9 4018.7,1201.0" fill="#f4f4f4" stroke="#e0e0e0" stroke-width="1.6" stroke-linejoin="round"/>
<polygon points="4028.6,1166.3 4043.5,1153.9 4063.3,1149.0 4058.3,1168.8 4053.4,1186.1 4033.6,1183.7" fill="#f4f4f4" stroke="#e0e0e0" stroke-width="1.6" stroke-linejoin="round"/>
<polygon points="4068.2,1171.3 4085.6,1168.8 4078.1,1183.7 4075.7,1193.6 4068.2,1183.7" fill="#f4f4f4" stroke="#e0e0e0" stroke-width="1.6" stroke-linejoin="round"/>
<polygon points="4068.2,1106.9 4075.7,1104.4 4080.6,1126.7 4093.0,1141.5 4088.0,1151.5 4075.7,1146.5 4070.7,1124.2" fill="#f4f4f4" stroke="#e0e0e0" stroke-width="1.6" stroke-linejoin="round"/>
<polygon points="4107.9,1173.7 4127.7,1176.2 4152.4,1183.7 4184.6,1186.1 4189.6,1191.1 4177.2,1198.5 4182.2,1210.9 4162.4,1203.5 4147.5,1203.5 4127.7,1193.6 4110.3,1183.7" fill="#f4f4f4" stroke="#e0e0e0" stroke-width="1.6" stroke-linejoin="round"/>
<polygon points="4070.7,1077.2 4075.7,1082.1 4070.7,1092.0 4068.2,1087.1" fill="#f4f4f4" stroke="#e0e0e0" stroke-width="1.6" stroke-linejoin="round"/>
<polygon points="3919.6,1136.6 3927.1,1139.1 3929.5,1150.2 3922.1,1151.5" fill="#f4f4f4" stroke="#e0e0e0" stroke-width="1.6" stroke-linejoin="round"/>
<polygon points="4043.5,1258.0 4058.3,1245.6 4078.1,1233.2 4093.0,1223.3 4105.4,1215.9 4127.7,1215.9 4127.7,1225.8 4142.5,1235.7 4150.0,1208.4 4162.4,1233.2 4177.2,1248.0 4189.6,1265.4 4192.1,1282.7 4182.2,1300.1 4177.2,1314.9 4162.4,1322.4 4142.5,1317.4 4130.2,1305.0 4125.2,1297.6 4102.9,1292.6 4078.1,1297.6 4058.3,1307.5 4048.4,1302.5 4048.4,1287.7 4041.0,1267.9" fill="#f4f4f4" stroke="#e0e0e0" stroke-width="1.6" stroke-linejoin="round"/>
<polygon points="4154.9,1324.8 4172.3,1327.3 4169.8,1342.2 4159.9,1342.2" fill="#f4f4f4" stroke="#e0e0e0" stroke-width="1.6" stroke-linejoin="round"/>
<polygon points="4261.4,1302.5 4283.7,1317.4 4266.4,1337.2 4246.6,1357.0 4239.1,1352.1 4256.5,1332.3 4268.9,1317.4" fill="#f4f4f4" stroke="#e0e0e0" stroke-width="1.6" stroke-linejoin="round"/>
<polygon points="4194.6,1191.1 4206.9,1198.5 4224.3,1210.9 4209.4,1205.9" fill="#f4f4f4" stroke="#e0e0e0" stroke-width="1.6" stroke-linejoin="round"/></svg>
</body></html>
